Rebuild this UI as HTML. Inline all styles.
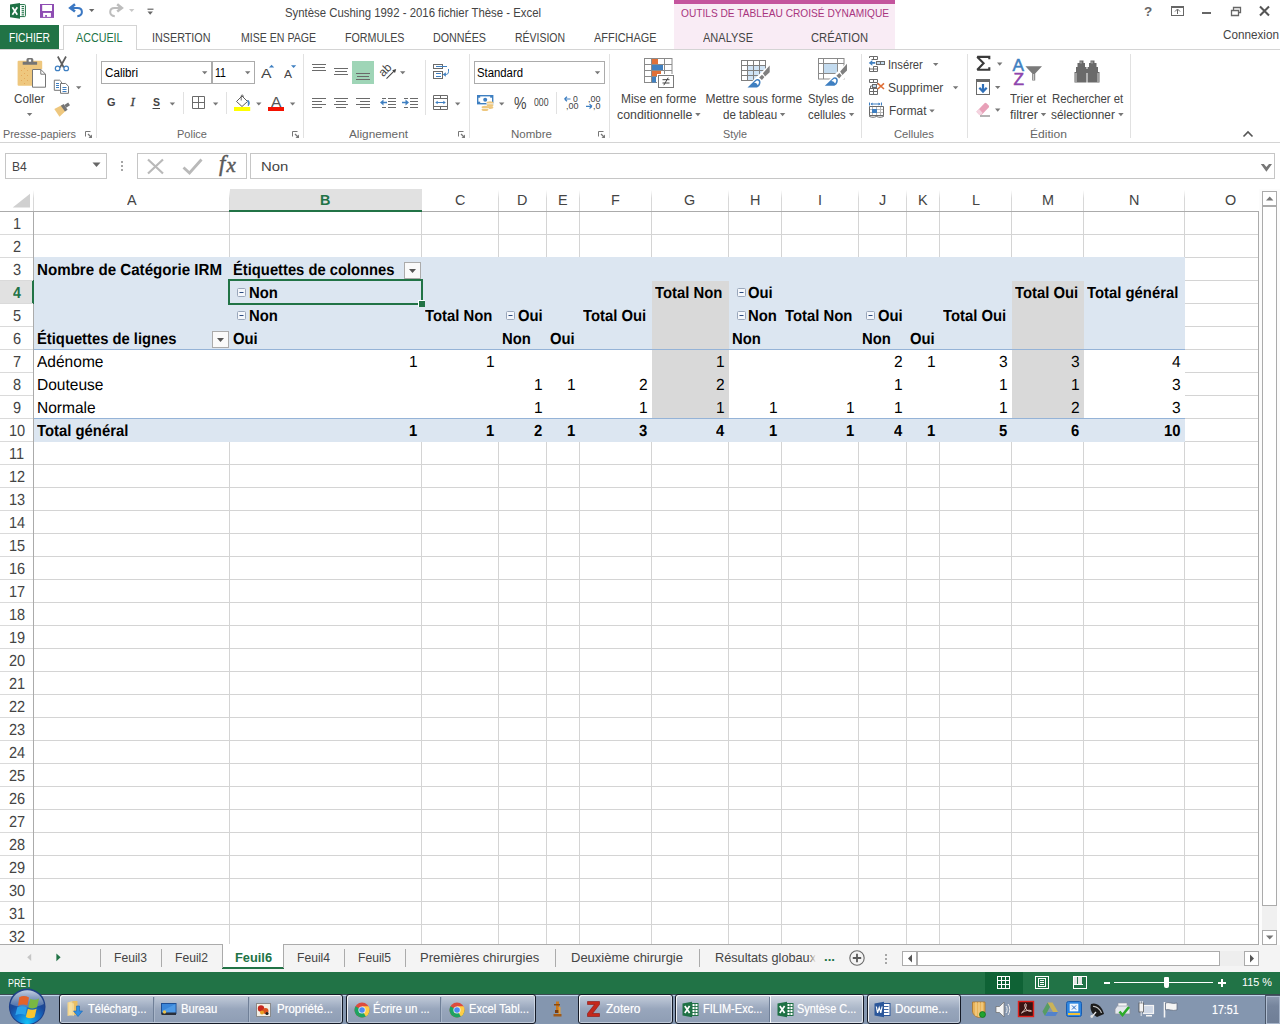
<!DOCTYPE html>
<html><head><meta charset="utf-8"><title>Excel</title>
<style>
html,body{margin:0;padding:0}
body{width:1280px;height:1024px;overflow:hidden;position:relative;background:#fff;font-family:"Liberation Sans",sans-serif}
.b{position:absolute;display:block}
.t{position:absolute;white-space:nowrap;transform-origin:0 50%;display:block}
</style></head>
<body>
<div class="b" style="left:0px;top:0px;width:1280px;height:189px;background:#fff;"></div>
<div class="b" style="left:674px;top:0px;width:221px;height:49px;background:#f9ecf5;"></div>
<div class="b" style="left:674px;top:0px;width:221px;height:4px;background:#c4549d;"></div>
<span class="t" style="left:285.00px;top:6.00px;font-size:12.5px;line-height:15px;color:#444;transform:scale(0.9105,1.0);transform-origin:0 11px;">Syntèse Cushing 1992 - 2016 fichier Thèse - Excel</span>
<span class="t" style="left:680.50px;top:7.00px;font-size:11px;line-height:13px;color:#a8357e;transform:scale(0.9239,1.0);transform-origin:0 10px;">OUTILS DE TABLEAU CROISÉ DYNAMIQUE</span>
<div class="b" style="left:0px;top:25px;width:59px;height:25px;background:#217346;"></div>
<span class="t" style="left:8.50px;top:31.00px;font-size:12px;line-height:14px;color:#fff;transform:scale(0.8542,1.0);transform-origin:0 11px;">FICHIER</span>
<div class="b" style="left:0px;top:49px;width:1280px;height:1px;background:#d4d4d4;"></div>
<div class="b" style="left:63px;top:25px;width:74px;height:25px;background:#fff;border:1px solid #d4d4d4;border-bottom:none;box-sizing:border-box;"></div>
<span class="t" style="left:76.00px;top:31.00px;font-size:12px;line-height:14px;color:#217346;transform:scale(0.8940,1.0);transform-origin:0 11px;">ACCUEIL</span>
<span class="t" style="left:152.00px;top:31.00px;font-size:12px;line-height:14px;color:#444;transform:scale(0.8983,1.0);transform-origin:0 11px;">INSERTION</span>
<span class="t" style="left:240.50px;top:31.00px;font-size:12px;line-height:14px;color:#444;transform:scale(0.8810,1.0);transform-origin:0 11px;">MISE EN PAGE</span>
<span class="t" style="left:345.00px;top:31.00px;font-size:12px;line-height:14px;color:#444;transform:scale(0.8924,1.0);transform-origin:0 11px;">FORMULES</span>
<span class="t" style="left:433.00px;top:31.00px;font-size:12px;line-height:14px;color:#444;transform:scale(0.8931,1.0);transform-origin:0 11px;">DONNÉES</span>
<span class="t" style="left:515.00px;top:31.00px;font-size:12px;line-height:14px;color:#444;transform:scale(0.8719,1.0);transform-origin:0 11px;">RÉVISION</span>
<span class="t" style="left:594.00px;top:31.00px;font-size:12px;line-height:14px;color:#444;transform:scale(0.9101,1.0);transform-origin:0 11px;">AFFICHAGE</span>
<span class="t" style="left:703.00px;top:31.00px;font-size:12px;line-height:14px;color:#444;transform:scale(0.9179,1.0);transform-origin:0 11px;">ANALYSE</span>
<span class="t" style="left:811.00px;top:31.00px;font-size:12px;line-height:14px;color:#444;transform:scale(0.9327,1.0);transform-origin:0 11px;">CRÉATION</span>
<span class="t" style="left:1223.00px;top:28.00px;font-size:12.5px;line-height:15px;color:#444;transform:scale(0.9370,1.0);transform-origin:0 11px;">Connexion</span>
<div class="b" style="left:0px;top:142px;width:1280px;height:1px;background:#d4d4d4;"></div>
<div class="b" style="left:96px;top:54px;width:1px;height:84px;background:#e1e1e1;"></div>
<div class="b" style="left:303px;top:54px;width:1px;height:84px;background:#e1e1e1;"></div>
<div class="b" style="left:469px;top:54px;width:1px;height:84px;background:#e1e1e1;"></div>
<div class="b" style="left:609px;top:54px;width:1px;height:84px;background:#e1e1e1;"></div>
<div class="b" style="left:861px;top:54px;width:1px;height:84px;background:#e1e1e1;"></div>
<div class="b" style="left:967px;top:54px;width:1px;height:84px;background:#e1e1e1;"></div>
<div class="b" style="left:1130px;top:54px;width:1px;height:84px;background:#e1e1e1;"></div>
<span class="t" style="left:3.00px;top:128.00px;font-size:10.8px;line-height:13px;color:#666;transform:scale(1.0051,1.0);transform-origin:0 10px;">Presse-papiers</span>
<span class="t" style="left:177.00px;top:128.00px;font-size:10.8px;line-height:13px;color:#666;transform:scale(1.0199,1.0);transform-origin:0 10px;">Police</span>
<span class="t" style="left:349.00px;top:128.00px;font-size:10.8px;line-height:13px;color:#666;transform:scale(1.0919,1.0);transform-origin:0 10px;">Alignement</span>
<span class="t" style="left:511.00px;top:128.00px;font-size:10.8px;line-height:13px;color:#666;transform:scale(1.0674,1.0);transform-origin:0 10px;">Nombre</span>
<span class="t" style="left:723.00px;top:128.00px;font-size:10.8px;line-height:13px;color:#666;">Style</span>
<span class="t" style="left:894.00px;top:128.00px;font-size:10.8px;line-height:13px;color:#666;transform:scale(1.0412,1.0);transform-origin:0 10px;">Cellules</span>
<span class="t" style="left:1030.00px;top:128.00px;font-size:10.8px;line-height:13px;color:#666;transform:scale(1.1204,1.0);transform-origin:0 10px;">Édition</span>
<svg class="b" style="left:0;top:0" width="1280" height="145" viewBox="0 0 1280 145">
<rect x="19" y="4.600" width="6.400" height="12" rx="0.800" fill="#fff" stroke="#1e7145" stroke-width="1"/><rect x="21.600" y="6" width="2.400" height="1.100" fill="#1e7145"/><rect x="21.600" y="8.1" width="2.400" height="1.100" fill="#1e7145"/><rect x="21.600" y="10.2" width="2.400" height="1.100" fill="#1e7145"/><rect x="21.600" y="12.2" width="2.400" height="1.100" fill="#1e7145"/><rect x="21.600" y="14.3" width="2.400" height="1.100" fill="#1e7145"/><path d="M10 4.400L20 2.900V18.700L10 17.300Z" fill="#1e7145"/><path d="M12.400 7.300L17.300 14.700M17.300 7.300L12.400 14.700" stroke="#fff" stroke-width="1.700"/><rect x="40" y="4" width="14" height="13.900" fill="#8e4db3"/><rect x="42.200" y="5" width="9.800" height="6" fill="#fff"/><rect x="43.100" y="12.900" width="7.800" height="4" fill="#fff"/><rect x="45.200" y="15" width="1.700" height="1.900" fill="#8e4db3"/><path d="M70.5 7.900H77.500C80.500 7.900 81.900 9.900 81.900 12C81.900 14.300 80 15.900 77.300 16.200" fill="none" stroke="#3b78c3" stroke-width="2"/><path d="M75 4.300L70.300 7.900L75 11.600" fill="none" stroke="#3b78c3" stroke-width="2.600"/><path d="M89 9h5.400l-2.700 3.100z" fill="#666"/><path d="M121.500 7.900H114.500C111.500 7.900 110.200 9.900 110.200 12C110.200 14.300 112 15.900 114.800 16.200" fill="none" stroke="#bdbdbd" stroke-width="2"/><path d="M117.200 4.300L121.800 7.900L117.200 11.600" fill="none" stroke="#bdbdbd" stroke-width="2.600"/><path d="M129 9h5.400l-2.700 3.100z" fill="#c8c8c8"/><rect x="147.5" y="8.6" width="6" height="1.2" fill="#666"/><path d="M147.5 11.6h5.400l-2.700 3.100z" fill="#666"/><text x="1144" y="16.300" font-size="13.500" font-weight="bold" fill="#666" font-family="Liberation Sans">?</text><rect x="1171.5" y="6.5" width="12" height="9" fill="none" stroke="#666" stroke-width="1"/><rect x="1171" y="6" width="13" height="2" fill="#666"/><path d="M1177.5 14V9.5M1175 11.5L1177.5 9L1180 11.5" fill="none" stroke="#666" stroke-width="1"/><rect x="1202" y="12" width="9" height="2" fill="#666"/><path d="M1231.5 10.5H1238.500V15.5H1231.5Z M1233.5 10V7.500H1240.500V12.500H1239" fill="none" stroke="#666" stroke-width="1.3"/><path d="M1260 6.500L1269 15.500M1269 6.500L1260 15.500" stroke="#555" stroke-width="2.1"/><path d="M1243.5 136.500L1248 132L1252.500 136.500" fill="none" stroke="#555" stroke-width="1.6"/>
<path d="M18.6 60.7H41.2A1 1 0 0 1 42.200 61.7V69H32V85.7H18.6A1 1 0 0 1 17.6 84.7V61.7A1 1 0 0 1 18.6 60.7Z" fill="#eec77e"/><rect x="21" y="70" width="1" height="1" fill="#e5a95a"/><rect x="24" y="68" width="1" height="1" fill="#e5a95a"/><rect x="27" y="70" width="1" height="1" fill="#e5a95a"/><rect x="21" y="75" width="1" height="1" fill="#e5a95a"/><rect x="24" y="73" width="1" height="1" fill="#e5a95a"/><rect x="27" y="75" width="1" height="1" fill="#e5a95a"/><rect x="21" y="80" width="1" height="1" fill="#e5a95a"/><rect x="24" y="78" width="1" height="1" fill="#e5a95a"/><rect x="27" y="80" width="1" height="1" fill="#e5a95a"/><rect x="24" y="83" width="1" height="1" fill="#e5a95a"/><path d="M22.7 64.8V61.8H26.500V59.6A1.700 1.700 0 0 1 28.2 57.9H31.6A1.700 1.700 0 0 1 33.3 59.6V61.8H37.1V64.8Z" fill="#757575"/><rect x="28.700" y="59.5" width="2.4" height="2.2" fill="#fff"/><path d="M32.5 69.5H40.800L45.5 74.200V87.2H32.5Z" fill="#fff" stroke="#757575" stroke-width="1"/><path d="M40.800 69.500V74.200H45.5" fill="none" stroke="#757575" stroke-width="1"/><path d="M26.9 113h5.400l-2.700 3.100z" fill="#777"/><path d="M57.8 56.500L63.8 67.500M66 56.500L60 67.500" stroke="#5e5e5e" stroke-width="1.700" fill="none"/><circle cx="57.6" cy="68.4" r="2.3" fill="none" stroke="#3e7fc1" stroke-width="1.200"/><circle cx="66.200" cy="68.4" r="2.3" fill="none" stroke="#3e7fc1" stroke-width="1.200"/><path d="M54.300 80.200H59.6L61.5 82V84M54.300 80.200V90.300H60" fill="none" stroke="#757575" stroke-width="1"/><path d="M60.5 83.5H65.7L68.5 86.300V93.300H60.5Z" fill="#fff" stroke="#757575" stroke-width="1"/><rect x="56" y="83" width="3" height="1" fill="#3e7fc1"/><rect x="56" y="85" width="3" height="1" fill="#3e7fc1"/><rect x="56" y="87" width="3" height="1" fill="#3e7fc1"/><rect x="62.5" y="87" width="4.0" height="1" fill="#3e7fc1"/><rect x="62.5" y="89" width="4.0" height="1" fill="#3e7fc1"/><rect x="62.5" y="91" width="4.0" height="1" fill="#3e7fc1"/><path d="M76 86.2h5.400l-2.700 3.100z" fill="#777"/><path d="M54.300 109L61.5 105.300L65.5 111L59.500 116.800Z" fill="#eec77e"/><path d="M60.800 105.800L63.6 104L67.600 109.800L65 111.600Z" fill="#757575"/><path d="M64.300 105L68.200 102.600L70 105.300L66.200 107.800Z" fill="#757575"/><path d="M85.5 136.5V131.5H90.5" fill="none" stroke="#777" stroke-width="1"/><path d="M88 134L91.5 137.5" stroke="#777" stroke-width="1.2"/><path d="M92 134.5V138H88.5z" fill="#777"/>
<rect x="101.500" y="61.500" width="110" height="22" fill="#fff" stroke="#ababab" stroke-width="1"/><rect x="212.500" y="61.500" width="42" height="22" fill="#fff" stroke="#ababab" stroke-width="1"/><path d="M202 71.2h5.400l-2.700 3.100z" fill="#777"/><path d="M245 71.2h5.400l-2.700 3.100z" fill="#777"/><path d="M269 67.600L271.600 64.700L274.200 67.600Z" fill="#3e7fc1"/><path d="M291 65.300H296.200L293.600 68.100Z" fill="#3e7fc1"/><path d="M192.500 96.500H204.500V108.500H192.500ZM198.500 96.500V108.500M192.500 102.500H204.500" fill="none" stroke="#6a6a6a" stroke-width="1"/><path d="M212.9 102.4h5.400l-2.700 3.100z" fill="#777"/><rect x="183" y="92" width="1" height="22" fill="#e1e1e1"/><rect x="226" y="92" width="1" height="22" fill="#e1e1e1"/><rect x="152.500" y="108" width="7.5" height="1" fill="#444"/><path d="M169.7 102.4h5.400l-2.700 3.100z" fill="#777"/><path d="M236.500 101.500L242 96L247.500 101.500L242 106.500Z" fill="#fff" stroke="#5e5e5e" stroke-width="1"/><path d="M241.200 100.500V96A1 1 0 0 1 243.200 96V97" fill="none" stroke="#5e5e5e" stroke-width="0.9"/><path d="M247.700 100C249.500 101.500 250 103.500 248.300 105.800C248.500 103.800 248.300 102 247.700 100Z" fill="#3e7fc1" stroke="#3e7fc1" stroke-width="0.8"/><rect x="234" y="107" width="16.200" height="4" fill="#ffff00"/><path d="M256.1 102.4h5.400l-2.700 3.100z" fill="#777"/><rect x="268" y="107" width="16" height="4" fill="#f41100"/><path d="M289.9 102.4h5.400l-2.700 3.100z" fill="#777"/><path d="M292.5 136.5V131.5H297.5" fill="none" stroke="#777" stroke-width="1"/><path d="M295 134L298.5 137.5" stroke="#777" stroke-width="1.2"/><path d="M299 134.5V138H295.5z" fill="#777"/>
<rect x="312" y="64" width="14" height="1" fill="#6a6a6a"/><rect x="313" y="67" width="12" height="1" fill="#6a6a6a"/><rect x="312" y="70" width="14" height="1" fill="#6a6a6a"/><rect x="334" y="68" width="14" height="1" fill="#6a6a6a"/><rect x="335" y="71" width="12" height="1" fill="#6a6a6a"/><rect x="334" y="74" width="14" height="1" fill="#6a6a6a"/><rect x="352" y="61" width="22" height="23" fill="#9fd5b7"/><rect x="356" y="73" width="14" height="1" fill="#6a6a6a"/><rect x="357" y="76" width="12" height="1" fill="#6a6a6a"/><rect x="356" y="79" width="14" height="1" fill="#6a6a6a"/><g transform="translate(387.500,71) rotate(-45)"><text x="-7.500" y="1.500" font-size="12" fill="#444" font-family="Liberation Sans" textLength="13" lengthAdjust="spacingAndGlyphs">ab</text></g><path d="M386.500 78.700L395 70.200" stroke="#444" stroke-width="1.1"/><path d="M396.200 69L392.200 70.200L395 73Z" fill="#444"/><path d="M400 71.2h5.400l-2.700 3.100z" fill="#777"/><rect x="312" y="98" width="14" height="1" fill="#6a6a6a"/><rect x="334" y="98" width="14" height="1" fill="#6a6a6a"/><rect x="356" y="98" width="14" height="1" fill="#6a6a6a"/><rect x="312" y="101" width="10" height="1" fill="#6a6a6a"/><rect x="336" y="101" width="10" height="1" fill="#6a6a6a"/><rect x="360" y="101" width="10" height="1" fill="#6a6a6a"/><rect x="312" y="104" width="14" height="1" fill="#6a6a6a"/><rect x="334" y="104" width="14" height="1" fill="#6a6a6a"/><rect x="356" y="104" width="14" height="1" fill="#6a6a6a"/><rect x="312" y="107" width="10" height="1" fill="#6a6a6a"/><rect x="336" y="107" width="10" height="1" fill="#6a6a6a"/><rect x="360" y="107" width="10" height="1" fill="#6a6a6a"/><rect x="382" y="98" width="4" height="1" fill="#6a6a6a"/><rect x="388" y="98" width="8" height="1" fill="#6a6a6a"/><rect x="388" y="101" width="8" height="1" fill="#6a6a6a"/><rect x="388" y="104" width="8" height="1" fill="#6a6a6a"/><rect x="382" y="107" width="4" height="1" fill="#6a6a6a"/><rect x="388" y="107" width="8" height="1" fill="#6a6a6a"/><path d="M380 102.500L383.500 99.500V101.700H387V103.300H383.500V105.500Z" fill="#3e7fc1"/><rect x="404" y="98" width="4" height="1" fill="#6a6a6a"/><rect x="410" y="98" width="8" height="1" fill="#6a6a6a"/><rect x="410" y="101" width="8" height="1" fill="#6a6a6a"/><rect x="410" y="104" width="8" height="1" fill="#6a6a6a"/><rect x="404" y="107" width="4" height="1" fill="#6a6a6a"/><rect x="410" y="107" width="8" height="1" fill="#6a6a6a"/><path d="M409 102.500L405.500 99.500V101.700H402V103.300H405.500V105.500Z" fill="#3e7fc1"/><rect x="425" y="60" width="1" height="55" fill="#e1e1e1"/><rect x="433.500" y="64.500" width="9" height="4" fill="#fff" stroke="#6a6a6a"/><rect x="433.500" y="71.500" width="9" height="7" fill="#fff" stroke="#6a6a6a"/><rect x="436" y="66" width="11" height="1" fill="#3e7fc1"/><rect x="436" y="73" width="5" height="1" fill="#3e7fc1"/><rect x="436" y="76" width="5" height="1" fill="#3e7fc1"/><path d="M448.500 69V71.500C448.500 73.500 447.500 74.500 445.500 74.500H443.500" fill="none" stroke="#3e7fc1" stroke-width="1"/><path d="M442.800 74.500L445.800 72.300V76.700Z" fill="#3e7fc1"/><path d="M433.500 95.500H447.500V109.500H433.500ZM433.500 98.500H447.500M433.500 106.500H447.500M440.500 95.500V98.500M440.500 106.500V109.500" fill="none" stroke="#6a6a6a" stroke-width="1"/><rect x="436.5" y="102" width="8.0" height="1" fill="#3e7fc1"/><path d="M435.200 102.500L437.700 100.700V104.300ZM445.800 102.500L443.300 100.700V104.300Z" fill="#3e7fc1"/><path d="M455 102.4h5.400l-2.700 3.100z" fill="#777"/><path d="M458.5 136.5V131.5H463.5" fill="none" stroke="#777" stroke-width="1"/><path d="M461 134L464.5 137.5" stroke="#777" stroke-width="1.2"/><path d="M465 134.5V138H461.5z" fill="#777"/>
<rect x="474.500" y="61.500" width="130" height="22" fill="#fff" stroke="#ababab" stroke-width="1"/><path d="M594.8 71.2h5.400l-2.700 3.100z" fill="#777"/><rect x="477.700" y="95.700" width="15" height="8" fill="#fff" stroke="#3e7fc1" stroke-width="1.400"/><circle cx="485.200" cy="99.700" r="2" fill="#3e7fc1"/><rect x="477.700" y="95.700" width="2.5" height="2" fill="#3e7fc1"/><rect x="490.200" y="95.700" width="2.5" height="2" fill="#3e7fc1"/><rect x="477.700" y="101.700" width="2.5" height="2" fill="#3e7fc1"/><ellipse cx="490" cy="102.800" rx="3.400" ry="1.500" fill="#eec77e"/><ellipse cx="490" cy="105.300" rx="3.400" ry="1.500" fill="#eec77e"/><ellipse cx="490" cy="107.600" rx="3.400" ry="1.300" fill="#eec77e"/><ellipse cx="485" cy="107.300" rx="3.400" ry="1.500" fill="#eec77e"/><ellipse cx="485" cy="109.700" rx="3.400" ry="1.400" fill="#eec77e"/><rect x="486" y="103.500" width="8" height="0.700" fill="#fff"/><rect x="481" y="108.300" width="8" height="0.600" fill="#fff"/><path d="M499 102.4h5.400l-2.700 3.100z" fill="#777"/><rect x="556" y="92" width="1" height="22" fill="#e1e1e1"/><path d="M564.500 99H570.500M564.500 99L567 96.800M564.500 99L567 101.200" fill="none" stroke="#3e7fc1" stroke-width="1.200"/><path d="M586 106.300H592M592 106.300L589.500 104.100M592 106.300L589.500 108.500" fill="none" stroke="#3e7fc1" stroke-width="1.200"/><path d="M598.5 136.5V131.5H603.5" fill="none" stroke="#777" stroke-width="1"/><path d="M601 134L604.5 137.5" stroke="#777" stroke-width="1.2"/><path d="M605 134.5V138H601.5z" fill="#777"/>
<rect x="644.500" y="58.500" width="27.500" height="24" fill="#fff" stroke="#8a8a8a"/><path d="M651.500 58.500V82.500M664.500 58.500V82.500M644.500 64.500H672M644.500 70.500H672M644.500 76.500H672" stroke="#8a8a8a" stroke-width="1" fill="none"/><rect x="652" y="59" width="6" height="5" fill="#e07038"/><rect x="652" y="65" width="11" height="5" fill="#4080c0"/><rect x="652" y="71" width="9" height="5" fill="#e07038"/><rect x="652" y="77" width="4" height="5.500" fill="#4080c0"/><rect x="657" y="74" width="17.500" height="14.500" fill="#fff"/><rect x="658.500" y="75.500" width="15" height="12" fill="#fff" stroke="#7a7a7a"/><path d="M662.500 79.700H669.500M662.500 83H669.500M668.200 77.700L663.800 85.200" stroke="#444" stroke-width="1" fill="none"/><path d="M695.2 113.1h5.400l-2.700 3.100z" fill="#777"/><rect x="741.500" y="60.500" width="24" height="20" fill="#fff" stroke="#7f7f7f"/><rect x="748" y="66" width="17" height="14" fill="#cfe3f5"/><path d="M747.500 60.500V80.500M753.500 60.500V80.500M759.500 60.500V80.500M741.500 65.500H765.500M741.500 70.500H765.500M741.500 75.500H765.500" stroke="#7f7f7f" stroke-width="1" fill="none"/><path d="M770.0 64.0 771.0 74.0 766.5 81.3 761.7 83.0 756.7 88.8 745.2 88.8 754.5 78.7 761.7 72.0Z" fill="#fff"/><path d="M769.7 65.5 769.7 72.3 765.1 76.6 762.9 73.3Z" fill="#7f7f7f"/><path d="M762.0 74.8 764.4 77.1 761.9 80.1 759.1 77.4Z" fill="#7f7f7f"/><path d="M747.5 87.5L755.2 80.1C757.2 78.1 760.5 79.0 760.5 82.0C760.5 85.0 758.7 87.5 756.2 87.5Z" fill="#3e7fc1"/><path d="M754.0 82.8L756.5 80.8C758.0 80.0 759.4 81.3 758.9 83.0L757.9 85.3L756.1 83.1Z" fill="#fff"/><path d="M779.9 113.1h5.400l-2.700 3.100z" fill="#777"/><rect x="818.500" y="58.500" width="25.500" height="20.500" fill="#fff" stroke="#8a8a8a"/><path d="M823.500 58.500V79M837.500 58.500V79M818.500 63.500H844M818.500 73.500H844" stroke="#8a8a8a" stroke-width="1" fill="none"/><rect x="824" y="64" width="13" height="9" fill="#c3dbef"/><path d="M847.3 62.3 848.3 72.3 843.8 79.6 839.0 81.3 834.0 87.1 822.5 87.1 831.8 77.0 839.0 70.3Z" fill="#fff"/><path d="M847.0 63.8 847.0 70.6 842.4 74.9 840.2 71.6Z" fill="#7f7f7f"/><path d="M839.3 73.1 841.7 75.4 839.2 78.4 836.4 75.7Z" fill="#7f7f7f"/><path d="M824.8 85.8L832.5 78.4C834.5 76.4 837.8 77.3 837.8 80.3C837.8 83.3 836.0 85.8 833.5 85.8Z" fill="#3e7fc1"/><path d="M831.3 81.1L833.8 79.1C835.3 78.3 836.7 79.6 836.2 81.3L835.2 83.6L833.4 81.4Z" fill="#fff"/><path d="M848.9 113.1h5.400l-2.700 3.100z" fill="#777"/>
<path d="M871.500 59.500H877.500V56.500H869.500V58M873.500 56.500V59.500" fill="none" stroke="#6a6a6a"/><path d="M873.500 66.500H877.500V71.500H869.500V67.500M873.500 66.500V71.500M869.500 69H877.500" fill="none" stroke="#6a6a6a"/><rect x="876.500" y="61.500" width="8" height="3" fill="#c3dbef" stroke="#6a6a6a"/><path d="M880.500 61.500V64.500" stroke="#6a6a6a"/><path d="M868.800 62.900L872.300 60V62H875.300V63.800H872.300V65.800Z" fill="#3e7fc1"/><path d="M933 63h5.400l-2.700 3.100z" fill="#777"/><path d="M869.500 79.500H877.500V82.500H869.500ZM873.500 79.500V82.500" fill="none" stroke="#6a6a6a"/><path d="M869.500 88.500H877.500V94.500H869.500ZM873.500 88.500V94.500M869.500 91.500H877.500" fill="none" stroke="#6a6a6a"/><path d="M870.500 88V86H872.500M877.500 83V84.500" fill="none" stroke="#6a6a6a"/><rect x="872.500" y="84.500" width="4" height="3" fill="#c3dbef" stroke="#6a6a6a"/><path d="M877.800 83.300L884 89M884 83.300L877.800 89" stroke="#e07038" stroke-width="1.600"/><path d="M952.9 86.2h5.400l-2.700 3.100z" fill="#777"/><path d="M869.500 102.500V105.500M881.500 102.500V105.500M871 104H880" stroke="#3e7fc1" stroke-width="1" fill="none"/><path d="M870.500 104L872.500 102.500V105.500ZM880.500 104L878.500 102.500V105.500Z" fill="#3e7fc1"/><path d="M869.500 109.500H883.500M869.500 112.500H883.500M872.500 106.500V115.500M876.500 106.500V115.500M880.500 106.500V115.500" fill="none" stroke="#b8b8b8"/><path d="M869.500 106.500H883.500V115.500H869.500Z" fill="none" stroke="#6a6a6a"/><rect x="872" y="109" width="5" height="4" fill="#3e7fc1"/><path d="M869.500 115.500V116.500C872 117.500 874 117.500 876.500 116.500C879 117.500 881 117.500 883.500 116.500V115.500" fill="none" stroke="#6a6a6a"/><path d="M929.3 109.4h5.400l-2.700 3.100z" fill="#777"/>
<path d="M989.300 59.300V56.900H977.300L983.600 63.300L977.300 69.700H989.300V67.300" fill="none" stroke="#3a3a3a" stroke-width="2.100" stroke-linejoin="miter" stroke-miterlimit="2"/><path d="M997 62.6h5.400l-2.700 3.100z" fill="#777"/><rect x="976.500" y="79.500" width="13" height="15" fill="#fff" stroke="#6a6a6a"/><rect x="976" y="79" width="14" height="3" fill="#6a6a6a"/><path d="M983 84V91M979.300 87.800L983 91.600L986.700 87.800" fill="none" stroke="#2f6fb8" stroke-width="2.200"/><path d="M995 86h5.400l-2.700 3.100z" fill="#777"/><path d="M976.400 111.700L984.500 103.300A1.500 1.500 0 0 1 986.500 103.300L988.700 105.500A1.500 1.500 0 0 1 988.700 107.500L981.500 115L979.500 115Z" fill="#e8a0b8"/><path d="M976.400 111.700L979 109L982.700 113L980.800 115.200H979.500Z" fill="#f4d4e0"/><rect x="980" y="115.5" width="10" height="1" fill="#6a6a6a"/><path d="M995 108.6h5.400l-2.700 3.100z" fill="#777"/><text x="1012.500" y="70.600" font-size="16" fill="#3e7fc1" stroke="#3e7fc1" stroke-width="0.500" font-family="Liberation Sans" textLength="11.500" lengthAdjust="spacingAndGlyphs">A</text><text x="1013.500" y="84.800" font-size="16" fill="#8e44ad" stroke="#8e44ad" stroke-width="0.500" font-family="Liberation Sans" textLength="10.500" lengthAdjust="spacingAndGlyphs">Z</text><path d="M1025.400 66.200H1042L1035.200 73.500V80.600H1032.200V73.500Z" fill="#7a7a7a"/><rect x="1033.200" y="74" width="1" height="6" fill="#ddd"/><path d="M1040.8 113.1h5.400l-2.700 3.100z" fill="#777"/><path d="M1079.500 60.500H1083.500V63H1085V67H1086.500V82.500H1074.500V72H1076V67H1077.500V63H1079.500Z" fill="#6a6a6a"/><path d="M1090.500 60.500H1094.500V63H1096.500V67H1098V72H1099.500V82.500H1087.500V67H1089V63H1090.500Z" fill="#6a6a6a"/><rect x="1084" y="69" width="6" height="4" fill="#6a6a6a"/><rect x="1075.500" y="73" width="1" height="9" fill="#fff" opacity="0.700"/><rect x="1097.500" y="73" width="1" height="9" fill="#fff" opacity="0.700"/><rect x="1080.500" y="61.500" width="1" height="2" fill="#fff" opacity="0.600"/><rect x="1091.500" y="61.500" width="1" height="2" fill="#fff" opacity="0.600"/><path d="M1118.2 113.1h5.400l-2.700 3.100z" fill="#777"/>
</svg>
<span class="t" style="left:14.40px;top:92.00px;font-size:12px;line-height:14px;color:#444;transform:scale(0.9763,1.0);transform-origin:0 11px;">Coller</span>
<span class="t" style="left:104.80px;top:66.00px;font-size:12px;line-height:14px;color:#000;transform:scale(0.9704,1.0);transform-origin:0 11px;">Calibri</span>
<span class="t" style="left:215.00px;top:66.00px;font-size:12px;line-height:14px;color:#000;transform:scale(0.8830,1.0);transform-origin:0 11px;">11</span>
<span class="t" style="left:107.00px;top:95.00px;font-size:11.5px;line-height:14px;color:#444;font-weight:bold;transform:scale(0.9502,1.0);transform-origin:0 11px;">G</span>
<span class="t" style="left:130.50px;top:94.00px;font-size:13px;line-height:16px;color:#444;font-style:italic;font-family:'Liberation Serif',serif;-webkit-text-stroke:0.300px #444;">I</span>
<span class="t" style="left:152.60px;top:95.00px;font-size:11.5px;line-height:14px;color:#444;font-weight:bold;transform:scale(0.9126,1.0);transform-origin:0 11px;">S</span>
<span class="t" style="left:260.50px;top:66.00px;font-size:13.5px;line-height:16px;color:#444;transform:scale(1.1661,1.0);transform-origin:0 12px;">A</span>
<span class="t" style="left:283.70px;top:68.00px;font-size:10.5px;line-height:13px;color:#444;transform:scale(1.1423,1.0);transform-origin:0 10px;">A</span>
<span class="t" style="left:271.30px;top:94.00px;font-size:14.5px;line-height:17px;color:#555;transform:scale(1.0753,1.0);transform-origin:0 13px;">A</span>
<span class="t" style="left:477.20px;top:66.00px;font-size:12px;line-height:14px;color:#000;transform:scale(0.9445,1.0);transform-origin:0 11px;">Standard</span>
<span class="t" style="left:513.50px;top:94.00px;font-size:16px;line-height:19px;color:#444;transform:scale(0.8786,1.0);transform-origin:0 15px;">%</span>
<span class="t" style="left:533.70px;top:97.00px;font-size:10px;line-height:12px;color:#444;transform:scale(0.8691,1.0);transform-origin:0 9px;">000</span>
<span class="t" style="left:573.00px;top:94.00px;font-size:8.5px;line-height:10px;color:#444;transform:scale(1.0154,1.0);transform-origin:0 8px;">0</span>
<span class="t" style="left:565.50px;top:101.00px;font-size:8.5px;line-height:10px;color:#444;transform:scale(1.0579,1.0);transform-origin:0 8px;">,00</span>
<span class="t" style="left:588.00px;top:94.00px;font-size:8.5px;line-height:10px;color:#444;transform:scale(1.0579,1.0);transform-origin:0 8px;">,00</span>
<span class="t" style="left:593.00px;top:101.00px;font-size:8.5px;line-height:10px;color:#444;transform:scale(1.0580,1.0);transform-origin:0 8px;">,0</span>
<span class="t" style="left:620.70px;top:92.00px;font-size:12px;line-height:14px;color:#444;transform:scale(0.9918,1.0);transform-origin:0 11px;">Mise en forme</span>
<span class="t" style="left:616.70px;top:108.00px;font-size:12px;line-height:14px;color:#444;transform:scale(1.0274,1.0);transform-origin:0 11px;">conditionnelle</span>
<span class="t" style="left:705.40px;top:92.00px;font-size:12px;line-height:14px;color:#444;">Mettre sous forme</span>
<span class="t" style="left:722.60px;top:108.00px;font-size:12px;line-height:14px;color:#444;transform:scale(0.9652,1.0);transform-origin:0 11px;">de tableau</span>
<span class="t" style="left:808.00px;top:92.00px;font-size:12px;line-height:14px;color:#444;transform:scale(0.9319,1.0);transform-origin:0 11px;">Styles de</span>
<span class="t" style="left:808.00px;top:108.00px;font-size:12px;line-height:14px;color:#444;transform:scale(0.9420,1.0);transform-origin:0 11px;">cellules</span>
<span class="t" style="left:888.00px;top:58.00px;font-size:12px;line-height:14px;color:#444;transform:scale(0.9318,1.0);transform-origin:0 11px;">Insérer</span>
<span class="t" style="left:888.00px;top:81.00px;font-size:12px;line-height:14px;color:#444;">Supprimer</span>
<span class="t" style="left:888.50px;top:104.00px;font-size:12px;line-height:14px;color:#444;transform:scale(0.9867,1.0);transform-origin:0 11px;">Format</span>
<span class="t" style="left:1009.90px;top:92.00px;font-size:12px;line-height:14px;color:#444;transform:scale(0.9612,1.0);transform-origin:0 11px;">Trier et</span>
<span class="t" style="left:1010.30px;top:108.00px;font-size:12px;line-height:14px;color:#444;transform:scale(1.0500,1.0);transform-origin:0 11px;">filtrer</span>
<span class="t" style="left:1051.50px;top:92.00px;font-size:12px;line-height:14px;color:#444;transform:scale(0.9447,1.0);transform-origin:0 11px;">Rechercher et</span>
<span class="t" style="left:1051.10px;top:108.00px;font-size:12px;line-height:14px;color:#444;transform:scale(0.9876,1.0);transform-origin:0 11px;">sélectionner</span>
<div class="b" style="left:5px;top:153px;width:102px;height:26px;background:#fff;border:1px solid #c6c6c6;box-sizing:border-box;"></div>
<span class="t" style="left:12.00px;top:160.00px;font-size:12.5px;line-height:15px;color:#444;transform:scale(0.9680,1.0);transform-origin:0 11px;">B4</span>
<svg class="b" style="left:92px;top:162px" width="9" height="6"><path d="M0.5 0.5H8.5L4.5 5Z" fill="#666"/></svg>
<div class="b" style="left:121px;top:161px;width:2px;height:2px;background:#a6a6a6;"></div>
<div class="b" style="left:121px;top:165px;width:2px;height:2px;background:#a6a6a6;"></div>
<div class="b" style="left:121px;top:169px;width:2px;height:2px;background:#a6a6a6;"></div>
<div class="b" style="left:137px;top:153px;width:110px;height:26px;background:#fff;border:1px solid #c6c6c6;box-sizing:border-box;"></div>
<svg class="b" style="left:146px;top:158px" width="20" height="17"><path d="M2 1.500L17 15.500M17 1.500L2 15.500" stroke="#b9b9b9" stroke-width="2.200" fill="none"/></svg>
<svg class="b" style="left:182px;top:158px" width="22" height="17"><path d="M1.500 9.500L7.500 15L19.500 1.500" stroke="#b9b9b9" stroke-width="2.800" fill="none"/></svg>
<span class="t" style="left:219.00px;top:150.00px;font-size:23px;line-height:28px;color:#5a5a5a;font-style:italic;font-family:'Liberation Serif',serif;-webkit-text-stroke:0.450px #5a5a5a;">f</span>
<span class="t" style="left:226.50px;top:153.00px;font-size:21px;line-height:25px;color:#5a5a5a;font-style:italic;font-family:'Liberation Serif',serif;-webkit-text-stroke:0.450px #5a5a5a;">x</span>
<div class="b" style="left:250px;top:153px;width:1025px;height:26px;background:#fff;border:1px solid #c6c6c6;box-sizing:border-box;"></div>
<span class="t" style="left:261.20px;top:160.00px;font-size:12.5px;line-height:15px;color:#444;transform:scale(1.1905,1.0);transform-origin:0 11px;">Non</span>
<svg class="b" style="left:1260px;top:163px" width="13" height="10"><path d="M0.800 1H3.800L6.400 4L9 1H12L6.400 8.800Z" fill="#777"/></svg>
<div class="b" style="left:0px;top:189px;width:1280px;height:756px;background:#fff;"></div>
<div class="b" style="left:34px;top:234px;width:1225px;height:1px;background:#d4d4d4;"></div>
<div class="b" style="left:34px;top:257px;width:1225px;height:1px;background:#d4d4d4;"></div>
<div class="b" style="left:34px;top:280px;width:1225px;height:1px;background:#d4d4d4;"></div>
<div class="b" style="left:34px;top:303px;width:1225px;height:1px;background:#d4d4d4;"></div>
<div class="b" style="left:34px;top:326px;width:1225px;height:1px;background:#d4d4d4;"></div>
<div class="b" style="left:34px;top:349px;width:1225px;height:1px;background:#d4d4d4;"></div>
<div class="b" style="left:34px;top:372px;width:1225px;height:1px;background:#d4d4d4;"></div>
<div class="b" style="left:34px;top:395px;width:1225px;height:1px;background:#d4d4d4;"></div>
<div class="b" style="left:34px;top:418px;width:1225px;height:1px;background:#d4d4d4;"></div>
<div class="b" style="left:34px;top:441px;width:1225px;height:1px;background:#d4d4d4;"></div>
<div class="b" style="left:34px;top:464px;width:1225px;height:1px;background:#d4d4d4;"></div>
<div class="b" style="left:34px;top:487px;width:1225px;height:1px;background:#d4d4d4;"></div>
<div class="b" style="left:34px;top:510px;width:1225px;height:1px;background:#d4d4d4;"></div>
<div class="b" style="left:34px;top:533px;width:1225px;height:1px;background:#d4d4d4;"></div>
<div class="b" style="left:34px;top:556px;width:1225px;height:1px;background:#d4d4d4;"></div>
<div class="b" style="left:34px;top:579px;width:1225px;height:1px;background:#d4d4d4;"></div>
<div class="b" style="left:34px;top:602px;width:1225px;height:1px;background:#d4d4d4;"></div>
<div class="b" style="left:34px;top:625px;width:1225px;height:1px;background:#d4d4d4;"></div>
<div class="b" style="left:34px;top:648px;width:1225px;height:1px;background:#d4d4d4;"></div>
<div class="b" style="left:34px;top:671px;width:1225px;height:1px;background:#d4d4d4;"></div>
<div class="b" style="left:34px;top:694px;width:1225px;height:1px;background:#d4d4d4;"></div>
<div class="b" style="left:34px;top:717px;width:1225px;height:1px;background:#d4d4d4;"></div>
<div class="b" style="left:34px;top:740px;width:1225px;height:1px;background:#d4d4d4;"></div>
<div class="b" style="left:34px;top:763px;width:1225px;height:1px;background:#d4d4d4;"></div>
<div class="b" style="left:34px;top:786px;width:1225px;height:1px;background:#d4d4d4;"></div>
<div class="b" style="left:34px;top:809px;width:1225px;height:1px;background:#d4d4d4;"></div>
<div class="b" style="left:34px;top:832px;width:1225px;height:1px;background:#d4d4d4;"></div>
<div class="b" style="left:34px;top:855px;width:1225px;height:1px;background:#d4d4d4;"></div>
<div class="b" style="left:34px;top:878px;width:1225px;height:1px;background:#d4d4d4;"></div>
<div class="b" style="left:34px;top:901px;width:1225px;height:1px;background:#d4d4d4;"></div>
<div class="b" style="left:34px;top:924px;width:1225px;height:1px;background:#d4d4d4;"></div>
<div class="b" style="left:229px;top:212px;width:1px;height:733px;background:#d4d4d4;"></div>
<div class="b" style="left:421px;top:212px;width:1px;height:733px;background:#d4d4d4;"></div>
<div class="b" style="left:498px;top:212px;width:1px;height:733px;background:#d4d4d4;"></div>
<div class="b" style="left:546px;top:212px;width:1px;height:733px;background:#d4d4d4;"></div>
<div class="b" style="left:579px;top:212px;width:1px;height:733px;background:#d4d4d4;"></div>
<div class="b" style="left:651px;top:212px;width:1px;height:733px;background:#d4d4d4;"></div>
<div class="b" style="left:728px;top:212px;width:1px;height:733px;background:#d4d4d4;"></div>
<div class="b" style="left:781px;top:212px;width:1px;height:733px;background:#d4d4d4;"></div>
<div class="b" style="left:858px;top:212px;width:1px;height:733px;background:#d4d4d4;"></div>
<div class="b" style="left:906px;top:212px;width:1px;height:733px;background:#d4d4d4;"></div>
<div class="b" style="left:939px;top:212px;width:1px;height:733px;background:#d4d4d4;"></div>
<div class="b" style="left:1011px;top:212px;width:1px;height:733px;background:#d4d4d4;"></div>
<div class="b" style="left:1083px;top:212px;width:1px;height:733px;background:#d4d4d4;"></div>
<div class="b" style="left:1184px;top:212px;width:1px;height:733px;background:#d4d4d4;"></div>
<div class="b" style="left:1258px;top:212px;width:1px;height:733px;background:#d4d4d4;"></div>
<div class="b" style="left:34px;top:257px;width:1151px;height:185px;background:#fff;"></div>
<div class="b" style="left:34px;top:257px;width:1151px;height:92px;background:#dce6f1;"></div>
<div class="b" style="left:34px;top:419px;width:1151px;height:23px;background:#dce6f1;"></div>
<div class="b" style="left:652px;top:281px;width:77px;height:138px;background:#d9d9d9;"></div>
<div class="b" style="left:1012px;top:281px;width:72px;height:138px;background:#d9d9d9;"></div>
<div class="b" style="left:34px;top:349px;width:1151px;height:1px;background:#95b3d7;"></div>
<div class="b" style="left:34px;top:418px;width:1151px;height:1px;background:#95b3d7;"></div>
<div class="b" style="left:1258px;top:211px;width:1px;height:734px;background:#ababab;"></div>
<div class="b" style="left:0px;top:189px;width:1259px;height:22px;background:#fff;"></div>
<div class="b" style="left:0px;top:211px;width:1259px;height:1px;background:#ababab;"></div>
<div class="b" style="left:33px;top:212px;width:1px;height:733px;background:#ababab;"></div>
<div class="b" style="left:229px;top:190px;width:1px;height:21px;background:linear-gradient(#fff,#d8d8d8 40%);"></div>
<div class="b" style="left:421px;top:190px;width:1px;height:21px;background:linear-gradient(#fff,#d8d8d8 40%);"></div>
<div class="b" style="left:498px;top:190px;width:1px;height:21px;background:linear-gradient(#fff,#d8d8d8 40%);"></div>
<div class="b" style="left:546px;top:190px;width:1px;height:21px;background:linear-gradient(#fff,#d8d8d8 40%);"></div>
<div class="b" style="left:579px;top:190px;width:1px;height:21px;background:linear-gradient(#fff,#d8d8d8 40%);"></div>
<div class="b" style="left:651px;top:190px;width:1px;height:21px;background:linear-gradient(#fff,#d8d8d8 40%);"></div>
<div class="b" style="left:728px;top:190px;width:1px;height:21px;background:linear-gradient(#fff,#d8d8d8 40%);"></div>
<div class="b" style="left:781px;top:190px;width:1px;height:21px;background:linear-gradient(#fff,#d8d8d8 40%);"></div>
<div class="b" style="left:858px;top:190px;width:1px;height:21px;background:linear-gradient(#fff,#d8d8d8 40%);"></div>
<div class="b" style="left:906px;top:190px;width:1px;height:21px;background:linear-gradient(#fff,#d8d8d8 40%);"></div>
<div class="b" style="left:939px;top:190px;width:1px;height:21px;background:linear-gradient(#fff,#d8d8d8 40%);"></div>
<div class="b" style="left:1011px;top:190px;width:1px;height:21px;background:linear-gradient(#fff,#d8d8d8 40%);"></div>
<div class="b" style="left:1083px;top:190px;width:1px;height:21px;background:linear-gradient(#fff,#d8d8d8 40%);"></div>
<div class="b" style="left:1184px;top:190px;width:1px;height:21px;background:linear-gradient(#fff,#d8d8d8 40%);"></div>
<div class="b" style="left:33px;top:190px;width:1px;height:21px;background:linear-gradient(#fff,#d8d8d8 40%);"></div>
<div class="b" style="left:230px;top:189px;width:192px;height:22px;background:#e1e1e1;"></div>
<div class="b" style="left:229px;top:210px;width:193px;height:2px;background:#217346;"></div>
<div class="b" style="left:0px;top:281px;width:33px;height:23px;background:#e1e1e1;"></div>
<div class="b" style="left:0px;top:280px;width:32px;height:1px;background:#ababab;"></div>
<div class="b" style="left:0px;top:303px;width:32px;height:1px;background:#ababab;"></div>
<div class="b" style="left:32px;top:280px;width:2px;height:24px;background:#217346;"></div>
<div class="b" style="left:0px;top:234px;width:33px;height:1px;background:#dadada;"></div>
<div class="b" style="left:0px;top:257px;width:33px;height:1px;background:#dadada;"></div>
<div class="b" style="left:0px;top:280px;width:33px;height:1px;background:#dadada;"></div>
<div class="b" style="left:0px;top:303px;width:33px;height:1px;background:#dadada;"></div>
<div class="b" style="left:0px;top:326px;width:33px;height:1px;background:#dadada;"></div>
<div class="b" style="left:0px;top:349px;width:33px;height:1px;background:#dadada;"></div>
<div class="b" style="left:0px;top:372px;width:33px;height:1px;background:#dadada;"></div>
<div class="b" style="left:0px;top:395px;width:33px;height:1px;background:#dadada;"></div>
<div class="b" style="left:0px;top:418px;width:33px;height:1px;background:#dadada;"></div>
<div class="b" style="left:0px;top:441px;width:33px;height:1px;background:#dadada;"></div>
<div class="b" style="left:0px;top:464px;width:33px;height:1px;background:#dadada;"></div>
<div class="b" style="left:0px;top:487px;width:33px;height:1px;background:#dadada;"></div>
<div class="b" style="left:0px;top:510px;width:33px;height:1px;background:#dadada;"></div>
<div class="b" style="left:0px;top:533px;width:33px;height:1px;background:#dadada;"></div>
<div class="b" style="left:0px;top:556px;width:33px;height:1px;background:#dadada;"></div>
<div class="b" style="left:0px;top:579px;width:33px;height:1px;background:#dadada;"></div>
<div class="b" style="left:0px;top:602px;width:33px;height:1px;background:#dadada;"></div>
<div class="b" style="left:0px;top:625px;width:33px;height:1px;background:#dadada;"></div>
<div class="b" style="left:0px;top:648px;width:33px;height:1px;background:#dadada;"></div>
<div class="b" style="left:0px;top:671px;width:33px;height:1px;background:#dadada;"></div>
<div class="b" style="left:0px;top:694px;width:33px;height:1px;background:#dadada;"></div>
<div class="b" style="left:0px;top:717px;width:33px;height:1px;background:#dadada;"></div>
<div class="b" style="left:0px;top:740px;width:33px;height:1px;background:#dadada;"></div>
<div class="b" style="left:0px;top:763px;width:33px;height:1px;background:#dadada;"></div>
<div class="b" style="left:0px;top:786px;width:33px;height:1px;background:#dadada;"></div>
<div class="b" style="left:0px;top:809px;width:33px;height:1px;background:#dadada;"></div>
<div class="b" style="left:0px;top:832px;width:33px;height:1px;background:#dadada;"></div>
<div class="b" style="left:0px;top:855px;width:33px;height:1px;background:#dadada;"></div>
<div class="b" style="left:0px;top:878px;width:33px;height:1px;background:#dadada;"></div>
<div class="b" style="left:0px;top:901px;width:33px;height:1px;background:#dadada;"></div>
<div class="b" style="left:0px;top:924px;width:33px;height:1px;background:#dadada;"></div>
<svg class="b" style="left:12px;top:193px" width="19" height="16"><path d="M18 0.700V14.500H0.700Z" fill="#d0d0d0"/></svg>
<span class="t" style="left:126.70px;top:191.00px;font-size:15px;line-height:18px;color:#444;transform:scale(0.9600,1.0);transform-origin:0 14px;">A</span>
<span class="t" style="left:320.30px;top:191.00px;font-size:15px;line-height:18px;color:#217346;font-weight:bold;transform:scale(0.9600,1.0);transform-origin:0 14px;">B</span>
<span class="t" style="left:454.80px;top:191.00px;font-size:15px;line-height:18px;color:#444;transform:scale(0.9600,1.0);transform-origin:0 14px;">C</span>
<span class="t" style="left:517.30px;top:191.00px;font-size:15px;line-height:18px;color:#444;transform:scale(0.9600,1.0);transform-origin:0 14px;">D</span>
<span class="t" style="left:558.20px;top:191.00px;font-size:15px;line-height:18px;color:#444;transform:scale(0.9600,1.0);transform-origin:0 14px;">E</span>
<span class="t" style="left:611.10px;top:191.00px;font-size:15px;line-height:18px;color:#444;transform:scale(0.9600,1.0);transform-origin:0 14px;">F</span>
<span class="t" style="left:684.40px;top:191.00px;font-size:15px;line-height:18px;color:#444;transform:scale(0.9600,1.0);transform-origin:0 14px;">G</span>
<span class="t" style="left:749.80px;top:191.00px;font-size:15px;line-height:18px;color:#444;transform:scale(0.9600,1.0);transform-origin:0 14px;">H</span>
<span class="t" style="left:818.00px;top:191.00px;font-size:15px;line-height:18px;color:#444;transform:scale(0.9600,1.0);transform-origin:0 14px;">I</span>
<span class="t" style="left:878.90px;top:191.00px;font-size:15px;line-height:18px;color:#444;transform:scale(0.9600,1.0);transform-origin:0 14px;">J</span>
<span class="t" style="left:918.20px;top:191.00px;font-size:15px;line-height:18px;color:#444;transform:scale(0.9600,1.0);transform-origin:0 14px;">K</span>
<span class="t" style="left:971.50px;top:191.00px;font-size:15px;line-height:18px;color:#444;transform:scale(0.9600,1.0);transform-origin:0 14px;">L</span>
<span class="t" style="left:1041.50px;top:191.00px;font-size:15px;line-height:18px;color:#444;transform:scale(0.9600,1.0);transform-origin:0 14px;">M</span>
<span class="t" style="left:1128.80px;top:191.00px;font-size:15px;line-height:18px;color:#444;transform:scale(0.9600,1.0);transform-origin:0 14px;">N</span>
<span class="t" style="left:1224.90px;top:191.00px;font-size:15px;line-height:18px;color:#444;transform:scale(0.9600,1.0);transform-origin:0 14px;">O</span>
<span class="t" style="left:12.95px;top:216.00px;font-size:15px;line-height:18px;color:#444;transform:scale(0.9700,1.067);transform-origin:0 14px;text-rendering:geometricPrecision;">1</span>
<span class="t" style="left:12.95px;top:239.00px;font-size:15px;line-height:18px;color:#444;transform:scale(0.9700,1.067);transform-origin:0 14px;text-rendering:geometricPrecision;">2</span>
<span class="t" style="left:12.95px;top:262.00px;font-size:15px;line-height:18px;color:#444;transform:scale(0.9700,1.067);transform-origin:0 14px;text-rendering:geometricPrecision;">3</span>
<span class="t" style="left:13.04px;top:285.00px;font-size:15px;line-height:18px;color:#217346;font-weight:bold;transform:scale(0.9500,1.067);transform-origin:0 14px;text-rendering:geometricPrecision;">4</span>
<span class="t" style="left:12.95px;top:308.00px;font-size:15px;line-height:18px;color:#444;transform:scale(0.9700,1.067);transform-origin:0 14px;text-rendering:geometricPrecision;">5</span>
<span class="t" style="left:12.95px;top:331.00px;font-size:15px;line-height:18px;color:#444;transform:scale(0.9700,1.067);transform-origin:0 14px;text-rendering:geometricPrecision;">6</span>
<span class="t" style="left:12.95px;top:354.00px;font-size:15px;line-height:18px;color:#444;transform:scale(0.9700,1.067);transform-origin:0 14px;text-rendering:geometricPrecision;">7</span>
<span class="t" style="left:12.95px;top:377.00px;font-size:15px;line-height:18px;color:#444;transform:scale(0.9700,1.067);transform-origin:0 14px;text-rendering:geometricPrecision;">8</span>
<span class="t" style="left:12.95px;top:400.00px;font-size:15px;line-height:18px;color:#444;transform:scale(0.9700,1.067);transform-origin:0 14px;text-rendering:geometricPrecision;">9</span>
<span class="t" style="left:8.91px;top:423.00px;font-size:15px;line-height:18px;color:#444;transform:scale(0.9700,1.067);transform-origin:0 14px;text-rendering:geometricPrecision;">10</span>
<span class="t" style="left:9.45px;top:446.00px;font-size:15px;line-height:18px;color:#444;transform:scale(0.9700,1.067);transform-origin:0 14px;text-rendering:geometricPrecision;">11</span>
<span class="t" style="left:8.91px;top:469.00px;font-size:15px;line-height:18px;color:#444;transform:scale(0.9700,1.067);transform-origin:0 14px;text-rendering:geometricPrecision;">12</span>
<span class="t" style="left:8.91px;top:492.00px;font-size:15px;line-height:18px;color:#444;transform:scale(0.9700,1.067);transform-origin:0 14px;text-rendering:geometricPrecision;">13</span>
<span class="t" style="left:8.91px;top:515.00px;font-size:15px;line-height:18px;color:#444;transform:scale(0.9700,1.067);transform-origin:0 14px;text-rendering:geometricPrecision;">14</span>
<span class="t" style="left:8.91px;top:538.00px;font-size:15px;line-height:18px;color:#444;transform:scale(0.9700,1.067);transform-origin:0 14px;text-rendering:geometricPrecision;">15</span>
<span class="t" style="left:8.91px;top:561.00px;font-size:15px;line-height:18px;color:#444;transform:scale(0.9700,1.067);transform-origin:0 14px;text-rendering:geometricPrecision;">16</span>
<span class="t" style="left:8.91px;top:584.00px;font-size:15px;line-height:18px;color:#444;transform:scale(0.9700,1.067);transform-origin:0 14px;text-rendering:geometricPrecision;">17</span>
<span class="t" style="left:8.91px;top:607.00px;font-size:15px;line-height:18px;color:#444;transform:scale(0.9700,1.067);transform-origin:0 14px;text-rendering:geometricPrecision;">18</span>
<span class="t" style="left:8.91px;top:630.00px;font-size:15px;line-height:18px;color:#444;transform:scale(0.9700,1.067);transform-origin:0 14px;text-rendering:geometricPrecision;">19</span>
<span class="t" style="left:8.91px;top:653.00px;font-size:15px;line-height:18px;color:#444;transform:scale(0.9700,1.067);transform-origin:0 14px;text-rendering:geometricPrecision;">20</span>
<span class="t" style="left:8.91px;top:676.00px;font-size:15px;line-height:18px;color:#444;transform:scale(0.9700,1.067);transform-origin:0 14px;text-rendering:geometricPrecision;">21</span>
<span class="t" style="left:8.91px;top:699.00px;font-size:15px;line-height:18px;color:#444;transform:scale(0.9700,1.067);transform-origin:0 14px;text-rendering:geometricPrecision;">22</span>
<span class="t" style="left:8.91px;top:722.00px;font-size:15px;line-height:18px;color:#444;transform:scale(0.9700,1.067);transform-origin:0 14px;text-rendering:geometricPrecision;">23</span>
<span class="t" style="left:8.91px;top:745.00px;font-size:15px;line-height:18px;color:#444;transform:scale(0.9700,1.067);transform-origin:0 14px;text-rendering:geometricPrecision;">24</span>
<span class="t" style="left:8.91px;top:768.00px;font-size:15px;line-height:18px;color:#444;transform:scale(0.9700,1.067);transform-origin:0 14px;text-rendering:geometricPrecision;">25</span>
<span class="t" style="left:8.91px;top:791.00px;font-size:15px;line-height:18px;color:#444;transform:scale(0.9700,1.067);transform-origin:0 14px;text-rendering:geometricPrecision;">26</span>
<span class="t" style="left:8.91px;top:814.00px;font-size:15px;line-height:18px;color:#444;transform:scale(0.9700,1.067);transform-origin:0 14px;text-rendering:geometricPrecision;">27</span>
<span class="t" style="left:8.91px;top:837.00px;font-size:15px;line-height:18px;color:#444;transform:scale(0.9700,1.067);transform-origin:0 14px;text-rendering:geometricPrecision;">28</span>
<span class="t" style="left:8.91px;top:860.00px;font-size:15px;line-height:18px;color:#444;transform:scale(0.9700,1.067);transform-origin:0 14px;text-rendering:geometricPrecision;">29</span>
<span class="t" style="left:8.91px;top:883.00px;font-size:15px;line-height:18px;color:#444;transform:scale(0.9700,1.067);transform-origin:0 14px;text-rendering:geometricPrecision;">30</span>
<span class="t" style="left:8.91px;top:906.00px;font-size:15px;line-height:18px;color:#444;transform:scale(0.9700,1.067);transform-origin:0 14px;text-rendering:geometricPrecision;">31</span>
<span class="t" style="left:8.91px;top:929.00px;font-size:15px;line-height:18px;color:#444;transform:scale(0.9700,1.067);transform-origin:0 14px;text-rendering:geometricPrecision;">32</span>
<span class="t" style="left:36.80px;top:262.00px;font-size:15px;line-height:18px;color:#000;font-weight:bold;transform:scale(1.0089,1.067);transform-origin:0 14px;text-rendering:geometricPrecision;">Nombre de Catégorie IRM</span>
<span class="t" style="left:232.80px;top:262.00px;font-size:15px;line-height:18px;color:#000;font-weight:bold;transform:scale(0.9836,1.067);transform-origin:0 14px;text-rendering:geometricPrecision;">Étiquettes de colonnes</span>
<svg class="b" style="left:404px;top:262px" width="17" height="17"><rect x="0.5" y="0.5" width="16" height="16" fill="#fafafa" stroke="#ababab"/><path d="M5 7H12L8.5 11Z" fill="#555"/></svg>
<svg class="b" style="left:237px;top:288px" width="9" height="9"><rect x="0.5" y="0.5" width="8" height="8" rx="1" fill="#f4f7fb" stroke="#9aa7bb"/><path d="M2.5 4.5H6.5" stroke="#2b4a80" stroke-width="1"/></svg>
<span class="t" style="left:248.80px;top:285.00px;font-size:15px;line-height:18px;color:#000;font-weight:bold;transform:scale(0.9900,1.067);transform-origin:0 14px;text-rendering:geometricPrecision;">Non</span>
<svg class="b" style="left:237px;top:311px" width="9" height="9"><rect x="0.5" y="0.5" width="8" height="8" rx="1" fill="#f4f7fb" stroke="#9aa7bb"/><path d="M2.5 4.5H6.5" stroke="#2b4a80" stroke-width="1"/></svg>
<span class="t" style="left:248.80px;top:308.00px;font-size:15px;line-height:18px;color:#000;font-weight:bold;transform:scale(0.9900,1.067);transform-origin:0 14px;text-rendering:geometricPrecision;">Non</span>
<span class="t" style="left:36.80px;top:331.00px;font-size:15px;line-height:18px;color:#000;font-weight:bold;transform:scale(0.9845,1.067);transform-origin:0 14px;text-rendering:geometricPrecision;">Étiquettes de lignes</span>
<svg class="b" style="left:212px;top:331px" width="17" height="17"><rect x="0.5" y="0.5" width="16" height="16" fill="#fafafa" stroke="#ababab"/><path d="M5 7H12L8.5 11Z" fill="#555"/></svg>
<span class="t" style="left:232.80px;top:331.00px;font-size:15px;line-height:18px;color:#000;font-weight:bold;transform:scale(0.9900,1.067);transform-origin:0 14px;text-rendering:geometricPrecision;">Oui</span>
<span class="t" style="left:424.80px;top:308.00px;font-size:15px;line-height:18px;color:#000;font-weight:bold;transform:scale(0.9900,1.067);transform-origin:0 14px;text-rendering:geometricPrecision;">Total Non</span>
<svg class="b" style="left:506px;top:311px" width="9" height="9"><rect x="0.5" y="0.5" width="8" height="8" rx="1" fill="#f4f7fb" stroke="#9aa7bb"/><path d="M2.5 4.5H6.5" stroke="#2b4a80" stroke-width="1"/></svg>
<span class="t" style="left:517.80px;top:308.00px;font-size:15px;line-height:18px;color:#000;font-weight:bold;transform:scale(0.9900,1.067);transform-origin:0 14px;text-rendering:geometricPrecision;">Oui</span>
<span class="t" style="left:501.80px;top:331.00px;font-size:15px;line-height:18px;color:#000;font-weight:bold;transform:scale(0.9900,1.067);transform-origin:0 14px;text-rendering:geometricPrecision;">Non</span>
<span class="t" style="left:549.80px;top:331.00px;font-size:15px;line-height:18px;color:#000;font-weight:bold;transform:scale(0.9900,1.067);transform-origin:0 14px;text-rendering:geometricPrecision;">Oui</span>
<span class="t" style="left:582.80px;top:308.00px;font-size:15px;line-height:18px;color:#000;font-weight:bold;transform:scale(0.9900,1.067);transform-origin:0 14px;text-rendering:geometricPrecision;">Total Oui</span>
<span class="t" style="left:654.80px;top:285.00px;font-size:15px;line-height:18px;color:#000;font-weight:bold;transform:scale(0.9900,1.067);transform-origin:0 14px;text-rendering:geometricPrecision;">Total Non</span>
<svg class="b" style="left:737px;top:288px" width="9" height="9"><rect x="0.5" y="0.5" width="8" height="8" rx="1" fill="#f4f7fb" stroke="#9aa7bb"/><path d="M2.5 4.5H6.5" stroke="#2b4a80" stroke-width="1"/></svg>
<span class="t" style="left:747.80px;top:285.00px;font-size:15px;line-height:18px;color:#000;font-weight:bold;transform:scale(0.9900,1.067);transform-origin:0 14px;text-rendering:geometricPrecision;">Oui</span>
<svg class="b" style="left:737px;top:311px" width="9" height="9"><rect x="0.5" y="0.5" width="8" height="8" rx="1" fill="#f4f7fb" stroke="#9aa7bb"/><path d="M2.5 4.5H6.5" stroke="#2b4a80" stroke-width="1"/></svg>
<span class="t" style="left:747.80px;top:308.00px;font-size:15px;line-height:18px;color:#000;font-weight:bold;transform:scale(0.9900,1.067);transform-origin:0 14px;text-rendering:geometricPrecision;">Non</span>
<span class="t" style="left:731.80px;top:331.00px;font-size:15px;line-height:18px;color:#000;font-weight:bold;transform:scale(0.9900,1.067);transform-origin:0 14px;text-rendering:geometricPrecision;">Non</span>
<span class="t" style="left:784.80px;top:308.00px;font-size:15px;line-height:18px;color:#000;font-weight:bold;transform:scale(0.9900,1.067);transform-origin:0 14px;text-rendering:geometricPrecision;">Total Non</span>
<svg class="b" style="left:866px;top:311px" width="9" height="9"><rect x="0.5" y="0.5" width="8" height="8" rx="1" fill="#f4f7fb" stroke="#9aa7bb"/><path d="M2.5 4.5H6.5" stroke="#2b4a80" stroke-width="1"/></svg>
<span class="t" style="left:877.80px;top:308.00px;font-size:15px;line-height:18px;color:#000;font-weight:bold;transform:scale(0.9900,1.067);transform-origin:0 14px;text-rendering:geometricPrecision;">Oui</span>
<span class="t" style="left:861.80px;top:331.00px;font-size:15px;line-height:18px;color:#000;font-weight:bold;transform:scale(0.9900,1.067);transform-origin:0 14px;text-rendering:geometricPrecision;">Non</span>
<span class="t" style="left:909.80px;top:331.00px;font-size:15px;line-height:18px;color:#000;font-weight:bold;transform:scale(0.9900,1.067);transform-origin:0 14px;text-rendering:geometricPrecision;">Oui</span>
<span class="t" style="left:942.80px;top:308.00px;font-size:15px;line-height:18px;color:#000;font-weight:bold;transform:scale(0.9900,1.067);transform-origin:0 14px;text-rendering:geometricPrecision;">Total Oui</span>
<span class="t" style="left:1014.80px;top:285.00px;font-size:15px;line-height:18px;color:#000;font-weight:bold;transform:scale(0.9900,1.067);transform-origin:0 14px;text-rendering:geometricPrecision;">Total Oui</span>
<span class="t" style="left:1086.80px;top:285.00px;font-size:15px;line-height:18px;color:#000;font-weight:bold;transform:scale(0.9900,1.067);transform-origin:0 14px;text-rendering:geometricPrecision;">Total général</span>
<span class="t" style="left:36.80px;top:354.00px;font-size:15px;line-height:18px;color:#000;transform:scale(1.0350,1.067);transform-origin:0 14px;text-rendering:geometricPrecision;">Adénome</span>
<span class="t" style="left:36.80px;top:377.00px;font-size:15px;line-height:18px;color:#000;transform:scale(1.0350,1.067);transform-origin:0 14px;text-rendering:geometricPrecision;">Douteuse</span>
<span class="t" style="left:36.80px;top:400.00px;font-size:15px;line-height:18px;color:#000;transform:scale(1.0350,1.067);transform-origin:0 14px;text-rendering:geometricPrecision;">Normale</span>
<span class="t" style="left:36.80px;top:423.00px;font-size:15px;line-height:18px;color:#000;font-weight:bold;transform:scale(0.9900,1.067);transform-origin:0 14px;text-rendering:geometricPrecision;">Total général</span>
<span class="t" style="left:408.87px;top:354.00px;font-size:15px;line-height:18px;color:#000;transform:scale(1.0350,1.067);transform-origin:0 14px;text-rendering:geometricPrecision;">1</span>
<span class="t" style="left:485.87px;top:354.00px;font-size:15px;line-height:18px;color:#000;transform:scale(1.0350,1.067);transform-origin:0 14px;text-rendering:geometricPrecision;">1</span>
<span class="t" style="left:715.87px;top:354.00px;font-size:15px;line-height:18px;color:#000;transform:scale(1.0350,1.067);transform-origin:0 14px;text-rendering:geometricPrecision;">1</span>
<span class="t" style="left:893.87px;top:354.00px;font-size:15px;line-height:18px;color:#000;transform:scale(1.0350,1.067);transform-origin:0 14px;text-rendering:geometricPrecision;">2</span>
<span class="t" style="left:926.87px;top:354.00px;font-size:15px;line-height:18px;color:#000;transform:scale(1.0350,1.067);transform-origin:0 14px;text-rendering:geometricPrecision;">1</span>
<span class="t" style="left:998.87px;top:354.00px;font-size:15px;line-height:18px;color:#000;transform:scale(1.0350,1.067);transform-origin:0 14px;text-rendering:geometricPrecision;">3</span>
<span class="t" style="left:1070.87px;top:354.00px;font-size:15px;line-height:18px;color:#000;transform:scale(1.0350,1.067);transform-origin:0 14px;text-rendering:geometricPrecision;">3</span>
<span class="t" style="left:1171.87px;top:354.00px;font-size:15px;line-height:18px;color:#000;transform:scale(1.0350,1.067);transform-origin:0 14px;text-rendering:geometricPrecision;">4</span>
<span class="t" style="left:533.87px;top:377.00px;font-size:15px;line-height:18px;color:#000;transform:scale(1.0350,1.067);transform-origin:0 14px;text-rendering:geometricPrecision;">1</span>
<span class="t" style="left:566.87px;top:377.00px;font-size:15px;line-height:18px;color:#000;transform:scale(1.0350,1.067);transform-origin:0 14px;text-rendering:geometricPrecision;">1</span>
<span class="t" style="left:638.87px;top:377.00px;font-size:15px;line-height:18px;color:#000;transform:scale(1.0350,1.067);transform-origin:0 14px;text-rendering:geometricPrecision;">2</span>
<span class="t" style="left:715.87px;top:377.00px;font-size:15px;line-height:18px;color:#000;transform:scale(1.0350,1.067);transform-origin:0 14px;text-rendering:geometricPrecision;">2</span>
<span class="t" style="left:893.87px;top:377.00px;font-size:15px;line-height:18px;color:#000;transform:scale(1.0350,1.067);transform-origin:0 14px;text-rendering:geometricPrecision;">1</span>
<span class="t" style="left:998.87px;top:377.00px;font-size:15px;line-height:18px;color:#000;transform:scale(1.0350,1.067);transform-origin:0 14px;text-rendering:geometricPrecision;">1</span>
<span class="t" style="left:1070.87px;top:377.00px;font-size:15px;line-height:18px;color:#000;transform:scale(1.0350,1.067);transform-origin:0 14px;text-rendering:geometricPrecision;">1</span>
<span class="t" style="left:1171.87px;top:377.00px;font-size:15px;line-height:18px;color:#000;transform:scale(1.0350,1.067);transform-origin:0 14px;text-rendering:geometricPrecision;">3</span>
<span class="t" style="left:533.87px;top:400.00px;font-size:15px;line-height:18px;color:#000;transform:scale(1.0350,1.067);transform-origin:0 14px;text-rendering:geometricPrecision;">1</span>
<span class="t" style="left:638.87px;top:400.00px;font-size:15px;line-height:18px;color:#000;transform:scale(1.0350,1.067);transform-origin:0 14px;text-rendering:geometricPrecision;">1</span>
<span class="t" style="left:715.87px;top:400.00px;font-size:15px;line-height:18px;color:#000;transform:scale(1.0350,1.067);transform-origin:0 14px;text-rendering:geometricPrecision;">1</span>
<span class="t" style="left:768.87px;top:400.00px;font-size:15px;line-height:18px;color:#000;transform:scale(1.0350,1.067);transform-origin:0 14px;text-rendering:geometricPrecision;">1</span>
<span class="t" style="left:845.87px;top:400.00px;font-size:15px;line-height:18px;color:#000;transform:scale(1.0350,1.067);transform-origin:0 14px;text-rendering:geometricPrecision;">1</span>
<span class="t" style="left:893.87px;top:400.00px;font-size:15px;line-height:18px;color:#000;transform:scale(1.0350,1.067);transform-origin:0 14px;text-rendering:geometricPrecision;">1</span>
<span class="t" style="left:998.87px;top:400.00px;font-size:15px;line-height:18px;color:#000;transform:scale(1.0350,1.067);transform-origin:0 14px;text-rendering:geometricPrecision;">1</span>
<span class="t" style="left:1070.87px;top:400.00px;font-size:15px;line-height:18px;color:#000;transform:scale(1.0350,1.067);transform-origin:0 14px;text-rendering:geometricPrecision;">2</span>
<span class="t" style="left:1171.87px;top:400.00px;font-size:15px;line-height:18px;color:#000;transform:scale(1.0350,1.067);transform-origin:0 14px;text-rendering:geometricPrecision;">3</span>
<span class="t" style="left:409.24px;top:423.00px;font-size:15px;line-height:18px;color:#000;font-weight:bold;transform:scale(0.9900,1.067);transform-origin:0 14px;text-rendering:geometricPrecision;">1</span>
<span class="t" style="left:486.24px;top:423.00px;font-size:15px;line-height:18px;color:#000;font-weight:bold;transform:scale(0.9900,1.067);transform-origin:0 14px;text-rendering:geometricPrecision;">1</span>
<span class="t" style="left:534.24px;top:423.00px;font-size:15px;line-height:18px;color:#000;font-weight:bold;transform:scale(0.9900,1.067);transform-origin:0 14px;text-rendering:geometricPrecision;">2</span>
<span class="t" style="left:567.24px;top:423.00px;font-size:15px;line-height:18px;color:#000;font-weight:bold;transform:scale(0.9900,1.067);transform-origin:0 14px;text-rendering:geometricPrecision;">1</span>
<span class="t" style="left:639.24px;top:423.00px;font-size:15px;line-height:18px;color:#000;font-weight:bold;transform:scale(0.9900,1.067);transform-origin:0 14px;text-rendering:geometricPrecision;">3</span>
<span class="t" style="left:716.24px;top:423.00px;font-size:15px;line-height:18px;color:#000;font-weight:bold;transform:scale(0.9900,1.067);transform-origin:0 14px;text-rendering:geometricPrecision;">4</span>
<span class="t" style="left:769.24px;top:423.00px;font-size:15px;line-height:18px;color:#000;font-weight:bold;transform:scale(0.9900,1.067);transform-origin:0 14px;text-rendering:geometricPrecision;">1</span>
<span class="t" style="left:846.24px;top:423.00px;font-size:15px;line-height:18px;color:#000;font-weight:bold;transform:scale(0.9900,1.067);transform-origin:0 14px;text-rendering:geometricPrecision;">1</span>
<span class="t" style="left:894.24px;top:423.00px;font-size:15px;line-height:18px;color:#000;font-weight:bold;transform:scale(0.9900,1.067);transform-origin:0 14px;text-rendering:geometricPrecision;">4</span>
<span class="t" style="left:927.24px;top:423.00px;font-size:15px;line-height:18px;color:#000;font-weight:bold;transform:scale(0.9900,1.067);transform-origin:0 14px;text-rendering:geometricPrecision;">1</span>
<span class="t" style="left:999.24px;top:423.00px;font-size:15px;line-height:18px;color:#000;font-weight:bold;transform:scale(0.9900,1.067);transform-origin:0 14px;text-rendering:geometricPrecision;">5</span>
<span class="t" style="left:1071.24px;top:423.00px;font-size:15px;line-height:18px;color:#000;font-weight:bold;transform:scale(0.9900,1.067);transform-origin:0 14px;text-rendering:geometricPrecision;">6</span>
<span class="t" style="left:1163.98px;top:423.00px;font-size:15px;line-height:18px;color:#000;font-weight:bold;transform:scale(0.9900,1.067);transform-origin:0 14px;text-rendering:geometricPrecision;">10</span>
<div class="b" style="left:228px;top:279px;width:195px;height:26px;border:2px solid #217346;box-sizing:border-box;"></div>
<div class="b" style="left:418px;top:300px;width:7px;height:7px;background:#217346;border-left:1px solid #fff;border-top:1px solid #fff;box-sizing:border-box;"></div>
<div class="b" style="left:1259px;top:189px;width:21px;height:756px;background:#fcfcfc;"></div>
<div class="b" style="left:1262px;top:191px;width:15px;height:754px;background:#f0f0f0;"></div>
<div class="b" style="left:1262px;top:191px;width:15px;height:15px;background:#fff;border:1px solid #ababab;box-sizing:border-box;"></div>
<div class="b" style="left:1262px;top:206px;width:15px;height:700px;background:#fff;border:1px solid #ababab;box-sizing:border-box;"></div>
<div class="b" style="left:1262px;top:930px;width:15px;height:15px;background:#fff;border:1px solid #ababab;box-sizing:border-box;"></div>
<svg class="b" style="left:1266px;top:196px" width="8" height="5"><path d="M0 4.5H7.4L3.700 0.5Z" fill="#777"/></svg>
<svg class="b" style="left:1266px;top:935px" width="8" height="5"><path d="M0 0.5H7.4L3.700 4.5Z" fill="#777"/></svg>
<div class="b" style="left:0px;top:945px;width:1280px;height:27px;background:#f4f4f4;"></div>
<div class="b" style="left:0px;top:944px;width:1259px;height:1px;background:#ababab;"></div>
<svg class="b" style="left:26px;top:953px" width="8" height="9"><path d="M5.200 0.700V8L1.200 4.350Z" fill="#c6c6c6"/></svg>
<svg class="b" style="left:55px;top:953px" width="8" height="9"><path d="M1.400 0.500V8.200L5.600 4.350Z" fill="#217346"/></svg>
<div class="b" style="left:223px;top:944px;width:60px;height:24px;background:#fff;"></div>
<div class="b" style="left:222px;top:967px;width:62px;height:2px;background:#217346;"></div>
<div class="b" style="left:222px;top:945px;width:1px;height:23px;background:#ababab;"></div>
<div class="b" style="left:283px;top:945px;width:1px;height:23px;background:#ababab;"></div>
<div class="b" style="left:100px;top:949px;width:1px;height:18px;background:#ababab;"></div>
<div class="b" style="left:161px;top:949px;width:1px;height:18px;background:#ababab;"></div>
<div class="b" style="left:344px;top:949px;width:1px;height:18px;background:#ababab;"></div>
<div class="b" style="left:405px;top:949px;width:1px;height:18px;background:#ababab;"></div>
<div class="b" style="left:555px;top:949px;width:1px;height:18px;background:#ababab;"></div>
<div class="b" style="left:699px;top:949px;width:1px;height:18px;background:#ababab;"></div>
<span class="t" style="left:114.00px;top:950.00px;font-size:13px;line-height:16px;color:#444;transform:scale(0.9320,1.0);transform-origin:0 12px;">Feuil3</span>
<span class="t" style="left:175.00px;top:950.00px;font-size:13px;line-height:16px;color:#444;transform:scale(0.9320,1.0);transform-origin:0 12px;">Feuil2</span>
<span class="t" style="left:234.50px;top:950.00px;font-size:13px;line-height:16px;color:#217346;font-weight:bold;transform:scale(0.9849,1.0);transform-origin:0 12px;">Feuil6</span>
<span class="t" style="left:297.00px;top:950.00px;font-size:13px;line-height:16px;color:#444;transform:scale(0.9320,1.0);transform-origin:0 12px;">Feuil4</span>
<span class="t" style="left:358.00px;top:950.00px;font-size:13px;line-height:16px;color:#444;transform:scale(0.9320,1.0);transform-origin:0 12px;">Feuil5</span>
<span class="t" style="left:420.00px;top:950.00px;font-size:13px;line-height:16px;color:#444;">Premières chirurgies</span>
<span class="t" style="left:571.00px;top:950.00px;font-size:13px;line-height:16px;color:#444;">Deuxième chirurgie</span>
<span class="t" style="left:715.00px;top:950.00px;font-size:13px;line-height:16px;color:#444;transform:scale(0.9774,1.0);transform-origin:0 12px;">Résultats globaux</span>
<div class="b" style="left:809px;top:946px;width:7px;height:22px;background:linear-gradient(90deg,rgba(244,244,244,0),#f4f4f4);"></div>
<div class="b" style="left:816px;top:946px;width:6px;height:22px;background:#f4f4f4;"></div>
<span class="t" style="left:824.00px;top:949.00px;font-size:13px;line-height:16px;color:#217346;font-weight:bold;transform:scale(1.0152,1.0);transform-origin:0 12px;">...</span>
<svg class="b" style="left:848px;top:949px" width="18" height="18"><circle cx="9" cy="9" r="7.2" fill="none" stroke="#6a6a6a" stroke-width="1.1"/><path d="M9 4.800V13.200M4.800 9H13.200" stroke="#5a5a5a" stroke-width="1.800"/></svg>
<div class="b" style="left:885px;top:954px;width:2px;height:2px;background:#a6a6a6;"></div>
<div class="b" style="left:885px;top:958px;width:2px;height:2px;background:#a6a6a6;"></div>
<div class="b" style="left:885px;top:962px;width:2px;height:2px;background:#a6a6a6;"></div>
<div class="b" style="left:902px;top:951px;width:357px;height:15px;background:#eee;"></div>
<div class="b" style="left:902px;top:951px;width:15px;height:15px;background:#fff;border:1px solid #ababab;box-sizing:border-box;"></div>
<div class="b" style="left:917px;top:951px;width:303px;height:15px;background:#fff;border:1px solid #ababab;box-sizing:border-box;"></div>
<div class="b" style="left:1244px;top:951px;width:15px;height:15px;background:#fff;border:1px solid #ababab;box-sizing:border-box;"></div>
<svg class="b" style="left:907px;top:954px" width="6" height="9"><path d="M5 0.5V8.5L1 4.5Z" fill="#555"/></svg>
<svg class="b" style="left:1249px;top:954px" width="6" height="9"><path d="M1 0.5V8.5L5 4.5Z" fill="#555"/></svg>
<div class="b" style="left:0px;top:972px;width:1280px;height:22px;background:#217346;"></div>
<span class="t" style="left:7.70px;top:976.00px;font-size:11.5px;line-height:14px;color:#fff;transform:scale(0.7695,1.0);transform-origin:0 11px;">PRÊT</span>
<div class="b" style="left:985px;top:972px;width:38px;height:22px;background:#0f6235;"></div>
<svg class="b" style="left:990px;top:972px" width="110" height="22" viewBox="990 972 110 22" shape-rendering="crispEdges"><rect x="997" y="976" width="1" height="13" fill="#fff"/><rect x="997" y="976" width="13" height="1" fill="#fff"/><rect x="1001" y="976" width="1" height="13" fill="#fff"/><rect x="997" y="980" width="13" height="1" fill="#fff"/><rect x="1005" y="976" width="1" height="13" fill="#fff"/><rect x="997" y="984" width="13" height="1" fill="#fff"/><rect x="1009" y="976" width="1" height="13" fill="#fff"/><rect x="997" y="988" width="13" height="1" fill="#fff"/><path d="M1035.500 976.500H1048.500V988.500H1035.500Z" fill="none" stroke="#fff" stroke-width="1"/><path d="M1038.500 978.500H1045.500V986.500H1038.500Z" fill="none" stroke="#fff" stroke-width="1"/><rect x="1040" y="980" width="4" height="1" fill="#fff"/><rect x="1040" y="982" width="4" height="1" fill="#fff"/><rect x="1040" y="984" width="4" height="1" fill="#fff"/><path d="M1073.500 976.500H1086.500V988.500H1073.500Z" fill="none" stroke="#fff" stroke-width="1"/><rect x="1074" y="977" width="3" height="7" fill="#e6e6e6"/><rect x="1078" y="977" width="4" height="7" fill="#e6e6e6"/><rect x="1074" y="984" width="9" height="1" fill="#fff"/></svg>
<div class="b" style="left:1104px;top:982px;width:6px;height:2px;background:#fff;"></div>
<div class="b" style="left:1114px;top:982px;width:99px;height:1px;background:#fff;"></div>
<div class="b" style="left:1164px;top:977px;width:5px;height:11px;background:#fff;border-radius:1px 1px 2px 2px;"></div>
<div class="b" style="left:1218px;top:982px;width:8px;height:2px;background:#fff;"></div>
<div class="b" style="left:1221px;top:979px;width:2px;height:8px;background:#fff;"></div>
<span class="t" style="left:1241.70px;top:975.00px;font-size:11.5px;line-height:14px;color:#fff;transform:scale(0.9448,1.0);transform-origin:0 11px;">115 %</span>
<div class="b" style="left:0px;top:994px;width:1280px;height:30px;background:#8496af;"></div>
<div class="b" style="left:0px;top:994px;width:1280px;height:1px;background:#3b4a52;"></div>
<div class="b" style="left:0px;top:995px;width:1280px;height:1px;background:#c0d6ea;"></div>
<div class="b" style="left:0px;top:996px;width:1280px;height:1px;background:#8a9cb5;"></div>
<svg class="b" style="left:6px;top:986px" width="42" height="38"><defs><radialGradient id="og" cx="50%" cy="95%" r="80%"><stop offset="0" stop-color="#12c0f4"/><stop offset="0.400" stop-color="#1478d2"/><stop offset="0.750" stop-color="#1a4a9c"/><stop offset="1" stop-color="#274a86"/></radialGradient><linearGradient id="ogl" x1="0" y1="0" x2="0" y2="1"><stop offset="0" stop-color="#dfe7f2" stop-opacity="0.850"/><stop offset="1" stop-color="#9fb4d0" stop-opacity="0.350"/></linearGradient></defs><circle cx="21.200" cy="20.800" r="18.300" fill="#1c3f8a"/><circle cx="21.200" cy="20.800" r="17.300" fill="url(#og)"/><path d="M4.500 18A17 17 0 0 1 37.900 18C30 22.500 13 22.500 4.500 18Z" fill="url(#ogl)"/><path d="M13.300 11.300Q18 8.800 23 11.600L21.300 19.600Q17 17.300 12 19.800Z" fill="#e3632a"/><path d="M24.300 12.800Q28.500 15 33 12.600L31 21.300Q26.500 23.500 22.300 21.200Z" fill="#79b843"/><path d="M11.300 21.300Q16 19 21 21.500L19.300 29Q14.500 27 9.300 29.300Z" fill="#2aa2ea"/><path d="M21.900 22.700Q26 25 30.600 22.700L28.600 31.300Q24 33.500 19.800 31Z" fill="#f7c531"/></svg>
<div class="b" style="left:59px;top:994px;width:284px;height:30px;border:1px solid #141a26;border-radius:3px;box-sizing:border-box;background:linear-gradient(#c6cfdc 0%,#aab6c9 30%,#98a6bc 50%,#8e9db4 100%);box-shadow:inset 1px 1px 0 rgba(255,255,255,.85),inset -1px -1px 0 rgba(225,232,242,.6);"></div>
<div class="b" style="left:153px;top:997px;width:1px;height:25px;background:#6f7f97;"></div>
<div class="b" style="left:154px;top:997px;width:1px;height:25px;background:#a9b6c9;"></div>
<div class="b" style="left:248px;top:997px;width:1px;height:25px;background:#6f7f97;"></div>
<div class="b" style="left:249px;top:997px;width:1px;height:25px;background:#a9b6c9;"></div>
<svg class="b" style="left:66px;top:1000px" width="17" height="18"><path d="M1.500 2.500L6.500 1V15L1.500 16Z" fill="#f3d58c"/><path d="M6.500 1H11.500V15H6.500Z" fill="#e9bf64"/><path d="M3 2.300L8 3.500V16L3 15Z" fill="#f7e2a8" opacity="0.700"/><path d="M10.500 6V11H7.500L12 16.500L16.500 11H13.500V6Z" fill="#2f8fe3" stroke="#1a64b3" stroke-width="0.600"/></svg>
<span class="t" style="left:87.50px;top:1002.00px;font-size:12px;line-height:14px;color:#fff;transform:scale(0.9232,1.0);transform-origin:0 11px;text-shadow:0 0 1px rgba(255,255,255,.55);">Télécharg...</span>
<svg class="b" style="left:161px;top:1003px" width="16" height="13"><rect x="0.500" y="0.500" width="14.500" height="10" fill="#3a86d9" stroke="#1d4f96"/><path d="M1 8L14.500 1V10.500H1Z" fill="#5ba6ec" opacity="0.600"/><rect x="0.500" y="9.500" width="14.500" height="2.500" fill="#2a2f3a"/><circle cx="3.500" cy="9" r="1.700" fill="#e8c04a"/></svg>
<span class="t" style="left:181.30px;top:1002.00px;font-size:12px;line-height:14px;color:#fff;transform:scale(0.9407,1.0);transform-origin:0 11px;text-shadow:0 0 1px rgba(255,255,255,.55);">Bureau</span>
<svg class="b" style="left:256px;top:1003px" width="15" height="14"><rect x="0.500" y="0.500" width="14" height="13" fill="#f2eee4" stroke="#8a8a8a"/><circle cx="5" cy="5.500" r="3.200" fill="#c8281e"/><circle cx="9.500" cy="8" r="3" fill="#d9541e"/><circle cx="6" cy="9.500" r="2" fill="#e8a020"/><circle cx="11" cy="10.500" r="1.600" fill="#222"/></svg>
<span class="t" style="left:276.60px;top:1002.00px;font-size:12px;line-height:14px;color:#fff;transform:scale(0.9541,1.0);transform-origin:0 11px;text-shadow:0 0 1px rgba(255,255,255,.55);">Propriété...</span>
<div class="b" style="left:346px;top:994px;width:190px;height:30px;border:1px solid #141a26;border-radius:3px;box-sizing:border-box;background:linear-gradient(#c6cfdc 0%,#aab6c9 30%,#98a6bc 50%,#8e9db4 100%);box-shadow:inset 1px 1px 0 rgba(255,255,255,.85),inset -1px -1px 0 rgba(225,232,242,.6);"></div>
<div class="b" style="left:440px;top:997px;width:1px;height:25px;background:#6f7f97;"></div>
<div class="b" style="left:441px;top:997px;width:1px;height:25px;background:#a9b6c9;"></div>
<svg class="b" style="left:354px;top:1002px" width="16" height="16"><circle cx="8" cy="8" r="7.500" fill="#dd4b3e"/><path d="M8 8L1.500 4.300A7.500 7.500 0 0 0 4.300 14.500Z" fill="#1da462" /><path d="M8 8L4.300 14.500A7.500 7.500 0 0 0 15.500 8Z" fill="#1da462"/><path d="M8 8L11.800 14.500A7.500 7.500 0 0 0 14.500 4.300H8Z" fill="#ffcd46"/><circle cx="8" cy="8" r="3.600" fill="#f1f1f1"/><circle cx="8" cy="8" r="2.800" fill="#4c8bf5"/></svg>
<span class="t" style="left:373.30px;top:1002.00px;font-size:12px;line-height:14px;color:#fff;transform:scale(0.9241,1.0);transform-origin:0 11px;text-shadow:0 0 1px rgba(255,255,255,.55);">Écrire un ...</span>
<svg class="b" style="left:449px;top:1002px" width="16" height="16"><circle cx="8" cy="8" r="7.500" fill="#dd4b3e"/><path d="M8 8L1.500 4.300A7.500 7.500 0 0 0 4.300 14.500Z" fill="#1da462" /><path d="M8 8L4.300 14.500A7.500 7.500 0 0 0 15.500 8Z" fill="#1da462"/><path d="M8 8L11.800 14.500A7.500 7.500 0 0 0 14.500 4.300H8Z" fill="#ffcd46"/><circle cx="8" cy="8" r="3.600" fill="#f1f1f1"/><circle cx="8" cy="8" r="2.800" fill="#4c8bf5"/></svg>
<span class="t" style="left:468.80px;top:1002.00px;font-size:12px;line-height:14px;color:#fff;transform:scale(0.9306,1.0);transform-origin:0 11px;text-shadow:0 0 1px rgba(255,255,255,.55);">Excel Tabl...</span>
<svg class="b" style="left:553px;top:1001px" width="9" height="16"><rect x="3" y="0.500" width="3" height="9" fill="#c9781e"/><rect x="1" y="3" width="6" height="1.500" fill="#8a4a12"/><rect x="2" y="9" width="5" height="3" fill="#7a3e10"/><rect x="0.500" y="13" width="8" height="2.500" fill="#a05a18"/><rect x="5.500" y="6" width="2" height="7" fill="#e0a040"/></svg>
<div class="b" style="left:578px;top:994px;width:95px;height:30px;border:1px solid #141a26;border-radius:3px;box-sizing:border-box;background:linear-gradient(#c6cfdc 0%,#aab6c9 30%,#98a6bc 50%,#8e9db4 100%);box-shadow:inset 1px 1px 0 rgba(255,255,255,.85),inset -1px -1px 0 rgba(225,232,242,.6);"></div>
<svg class="b" style="left:587px;top:1001px" width="14" height="16"><path d="M0.500 0.500H12.500V3.500L5.500 12.500H12.500V15.500H0.500V12.500L7.500 3.500H0.500Z" fill="#c4281c" stroke="#8a1410" stroke-width="0.600"/></svg>
<span class="t" style="left:606.00px;top:1002.00px;font-size:12px;line-height:14px;color:#fff;transform:scale(0.9948,1.0);transform-origin:0 11px;text-shadow:0 0 1px rgba(255,255,255,.55);">Zotero</span>
<div class="b" style="left:675px;top:994px;width:189px;height:30px;border:1px solid #141a26;border-radius:3px;box-sizing:border-box;background:linear-gradient(#c6cfdc 0%,#aab6c9 30%,#98a6bc 50%,#8e9db4 100%);box-shadow:inset 1px 1px 0 rgba(255,255,255,.85),inset -1px -1px 0 rgba(225,232,242,.6);"></div>
<div class="b" style="left:770px;top:995px;width:93px;height:28px;border-radius:0 2px 2px 0;background:linear-gradient(#d3dae4 0%,#b9c3d2 30%,#aab6c8 50%,#a7b3c6 100%);box-shadow:inset 1px 1px 0 rgba(255,255,255,.9),inset -1px -1px 0 rgba(245,248,252,.7);"></div>
<div class="b" style="left:769px;top:997px;width:1px;height:25px;background:#6f7f97;"></div>
<svg class="b" style="left:682px;top:1001px" width="17" height="17"><path d="M0.500 2.500L10 0.700V16.300L0.500 14.500Z" fill="#1e7145"/><rect x="10" y="2.500" width="6" height="12" fill="#fff" stroke="#1e7145"/><path d="M10 5.500H16M10 8.500H16M10 11.500H16M13 2.500V14.500" stroke="#1e7145" stroke-width="0.900"/><path d="M2.800 5L7.600 12M7.600 5L2.800 12" stroke="#fff" stroke-width="1.700"/></svg>
<span class="t" style="left:702.50px;top:1002.00px;font-size:12px;line-height:14px;color:#fff;transform:scale(0.9170,1.0);transform-origin:0 11px;text-shadow:0 0 1px rgba(255,255,255,.55);">FILIM-Exc...</span>
<svg class="b" style="left:777px;top:1001px" width="17" height="17"><path d="M0.500 2.500L10 0.700V16.300L0.500 14.500Z" fill="#1e7145"/><rect x="10" y="2.500" width="6" height="12" fill="#fff" stroke="#1e7145"/><path d="M10 5.500H16M10 8.500H16M10 11.500H16M13 2.500V14.500" stroke="#1e7145" stroke-width="0.900"/><path d="M2.800 5L7.600 12M7.600 5L2.800 12" stroke="#fff" stroke-width="1.700"/></svg>
<span class="t" style="left:797.00px;top:1002.00px;font-size:12px;line-height:14px;color:#fff;transform:scale(0.9073,1.0);transform-origin:0 11px;text-shadow:0 0 1px rgba(255,255,255,.55);">Syntèse C...</span>
<div class="b" style="left:867px;top:994px;width:94px;height:30px;border:1px solid #141a26;border-radius:3px;box-sizing:border-box;background:linear-gradient(#c6cfdc 0%,#aab6c9 30%,#98a6bc 50%,#8e9db4 100%);box-shadow:inset 1px 1px 0 rgba(255,255,255,.85),inset -1px -1px 0 rgba(225,232,242,.6);"></div>
<svg class="b" style="left:874px;top:1001px" width="17" height="17"><rect x="8" y="2.500" width="8" height="12" fill="#fff" stroke="#2b579a"/><path d="M9.500 5.500H14.500M9.500 8.500H14.500M9.500 11.500H14.500" stroke="#2b579a" stroke-width="0.900"/><path d="M0.500 2.500L10 0.700V16.300L0.500 14.500Z" fill="#2b579a"/><path d="M2.300 5.500L3.600 11.800L5.200 6.500L6.800 11.800L8.100 5.500" fill="none" stroke="#fff" stroke-width="1.200"/></svg>
<span class="t" style="left:894.50px;top:1002.00px;font-size:12px;line-height:14px;color:#fff;transform:scale(0.9692,1.0);transform-origin:0 11px;text-shadow:0 0 1px rgba(255,255,255,.55);">Docume...</span>
<svg class="b" style="left:968px;top:998px" width="215" height="24" viewBox="968 998 215 24"><path d="M972.500 1002H985V1011C985 1014.500 981.500 1017 978.800 1017.500C976 1017 972.500 1014.500 972.500 1011Z" fill="#e9b45a" stroke="#a8742a" stroke-width="0.800"/><path d="M976 1002V1016M979 1002V1017M982 1002V1015" stroke="#f7dfa5" stroke-width="0.900"/><circle cx="982.500" cy="1014.500" r="3" fill="#22a32e" stroke="#0c6a16" stroke-width="0.700"/><path d="M996 1006.500H999.500L1004 1002V1017L999.500 1012.500H996Z" fill="#f4f4f4" stroke="#6a6a6a" stroke-width="0.700"/><path d="M1006 1006C1007.500 1008 1007.500 1011 1006 1013M1008 1004C1010.300 1007 1010.300 1012 1008 1015" fill="none" stroke="#f0f0f0" stroke-width="1"/><rect x="1018.500" y="1001.500" width="15" height="15" fill="#3a1412" stroke="#e0201a" stroke-width="1.400"/><path d="M1021.500 1013C1025 1010 1027 1006 1026 1004C1025 1003 1024 1005 1025.500 1008C1027 1011 1030 1012 1031.500 1011C1030 1009.500 1025 1010.500 1021.500 1013Z" fill="none" stroke="#f0d8d0" stroke-width="0.900"/><path d="M1047.500 1002.500H1052.500L1058 1012H1053Z" fill="#d6b94a" opacity="0.850"/><path d="M1047.500 1002.500L1042.500 1011.500L1045 1016L1050 1007Z" fill="#4f9e56" opacity="0.850"/><path d="M1045 1016H1055.500L1058 1012H1047.500Z" fill="#4a7fd0" opacity="0.850"/><rect x="1066.500" y="1001.500" width="15" height="15" rx="2" fill="#2f86e0" stroke="#1a5cae"/><rect x="1070" y="1004" width="8" height="7" fill="#e8f2ff" stroke="#fff" stroke-width="0.600"/><path d="M1072 1005.500L1076 1009.500M1076 1005.500L1072 1009.500" stroke="#2a6ac0" stroke-width="1"/><path d="M1068 1014H1080" stroke="#f2c23a" stroke-width="2"/><path d="M1091 1004C1096 1002 1102 1006 1104 1014L1097 1017C1091.500 1014 1089.500 1009 1091 1004Z" fill="#1b1b1b"/><path d="M1093 1006.500C1096 1006 1100 1009 1101.500 1013" fill="none" stroke="#bdbdbd" stroke-width="1.200"/><path d="M1092 1016.500L1096 1012" stroke="#e8e8e8" stroke-width="1.300"/><circle cx="1091.800" cy="1016.500" r="1.400" fill="#e0e0e0"/><path d="M1115 1009L1118 1005H1128L1130 1009V1014H1115Z" fill="#e4e7ec" stroke="#8a93a1" stroke-width="0.800"/><rect x="1118" y="1003" width="9" height="3" fill="#f6f6f6" stroke="#8a93a1" stroke-width="0.600"/><path d="M1119.500 1011.500L1122.500 1015L1129 1007" fill="none" stroke="#2daa2a" stroke-width="2.600"/><rect x="1143.500" y="1005.500" width="10" height="8" fill="#cfd8e6" stroke="#f4f4f4" stroke-width="1.200"/><rect x="1146" y="1015" width="6" height="1.500" fill="#f4f4f4"/><rect x="1139" y="1003" width="4.500" height="9" fill="#f4f4f4" stroke="#444" stroke-width="0.700"/><path d="M1140.200 1001V1003.500M1142.300 1001V1003.500M1141.200 1012V1016" stroke="#f4f4f4" stroke-width="0.900"/><path d="M1164.500 1002V1017.500" stroke="#f4f4f4" stroke-width="1.600"/><path d="M1165.500 1003C1169 1001.500 1172 1004.500 1177 1003V1010C1172 1011.500 1169 1008.500 1165.500 1010Z" fill="#f4f4f4" stroke="#5a6678" stroke-width="0.700"/></svg>
<span class="t" style="left:1211.60px;top:1003.00px;font-size:12px;line-height:14px;color:#fff;transform:scale(0.8891,1.0);transform-origin:0 11px;text-shadow:0 0 1px rgba(255,255,255,.55);">17:51</span>
<div class="b" style="left:1265px;top:995px;width:15px;height:29px;background:linear-gradient(#8d9bb1,#76859d 35%,#6f7e96);border:1px solid #4a5668;border-right:none;border-bottom:none;box-sizing:border-box;box-shadow:inset 1px 1px 0 #b0bed2,inset -1px -1px 0 #a5b3c8;"></div>
</body></html>
